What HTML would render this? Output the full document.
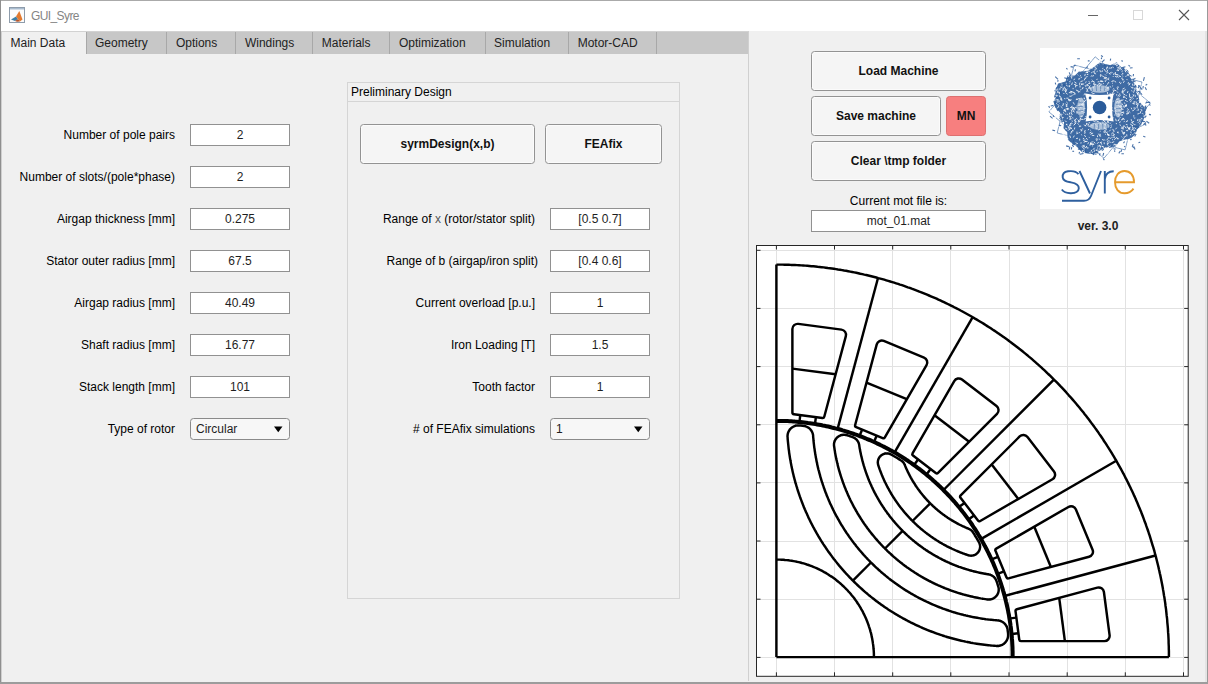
<!DOCTYPE html>
<html><head><meta charset="utf-8"><style>
html,body{margin:0;padding:0}
body{width:1208px;height:684px;position:relative;overflow:hidden;background:#f0f0f0;font-family:"Liberation Sans", sans-serif;font-size:12px;color:#1e1e1e}
.t{position:absolute;white-space:nowrap;line-height:14px;height:14px}
.ed{position:absolute;background:#fff;border:1px solid #919191;text-align:center;white-space:nowrap}
.bt{position:absolute;background:#f5f5f5;border:1px solid #939393;border-radius:3.5px;box-shadow:inset 0 0 0 1px #fbfbfb;text-align:center;font-weight:bold;white-space:nowrap;color:#111}
.pp{position:absolute;background:#f7f7f7;border:1px solid #8a8a8a;border-radius:3.5px;white-space:nowrap}
.tab{position:absolute;top:31px;box-sizing:border-box;border-left:1px solid #a8a8a8;line-height:22px;color:#222}
.tab span{position:absolute;left:8.5px;top:1px}
</style></head><body>
<div style="position:absolute;left:0;top:0;width:1208px;height:31px;background:#fff"></div>
<div style="position:absolute;left:0;top:0;width:1208px;height:1px;background:#aaa"></div>
<div style="position:absolute;left:0;top:0;width:1px;height:684px;background:#8f8f8f"></div><div style="position:absolute;left:1px;top:31px;width:1px;height:651px;background:#cfcfcf"></div>
<div style="position:absolute;left:1207px;top:0;width:1px;height:684px;background:#999"></div><div style="position:absolute;left:1205px;top:31px;width:2px;height:651px;background:#e4e4e4"></div>
<div style="position:absolute;left:0;top:682px;width:1208px;height:2px;background:#9c9c9c"></div>
<svg style="position:absolute;left:9px;top:7px" width="16" height="16"><rect x="0.5" y="0.5" width="15" height="15" fill="#fcfcfc" stroke="#8e9cab"/><rect x="1" y="1" width="14" height="1.5" fill="#a9bccf"/><path d="M2 12.5L7 9.5L9 12L6 14Z" fill="#3d7ea6"/><path d="M7 9.5L10.3 4L13.5 12.5L11 14.5L9 12Z" fill="#e27a30"/><path d="M9 12L11 14.5L8 14.8L6 14Z" fill="#b4562c"/></svg>
<div class="t" style="left:31px;top:9px;color:#858585;letter-spacing:-0.6px">GUI_Syre</div>
<svg style="position:absolute;left:1080px;top:5px" width="120" height="22"><g stroke="#666" stroke-width="1" fill="none"><path d="M8 10.5H18"/></g><g stroke="#555" stroke-width="1.1" fill="none"><path d="M99 5L109 15M109 5L99 15"/></g><rect x="53.5" y="5.5" width="9" height="9" fill="none" stroke="#d8d8d8"/></svg>
<div style="position:absolute;left:2px;top:31px;width:746px;height:23px;background:#c7c7c7"></div>
<div class="tab" style="left:2.0px;width:83.5px;height:24px;background:#f0f0f0;border-left:none;"><span>Main Data</span></div><div class="tab" style="left:85.5px;width:80.9px;height:23px;background:#c7c7c7;"><span>Geometry</span></div><div class="tab" style="left:166.4px;width:69.0px;height:23px;background:#c7c7c7;"><span>Options</span></div><div class="tab" style="left:235.4px;width:76.9px;height:23px;background:#c7c7c7;"><span>Windings</span></div><div class="tab" style="left:312.3px;width:76.7px;height:23px;background:#c7c7c7;"><span>Materials</span></div><div class="tab" style="left:389.4px;width:95.2px;height:23px;background:#c7c7c7;"><span>Optimization</span></div><div class="tab" style="left:484.6px;width:83.6px;height:23px;background:#c7c7c7;"><span>Simulation</span></div><div class="tab" style="left:568.2px;width:88.3px;height:23px;background:#c7c7c7;"><span>Motor-CAD</span></div>
<div style="position:absolute;left:656px;top:31px;width:1px;height:23px;background:#a8a8a8"></div>
<div style="position:absolute;left:2px;top:31px;width:746px;height:1px;background:#d2d2d2"></div>
<div style="position:absolute;left:748px;top:31px;width:1px;height:650px;background:#d0d0d0"></div>
<div class="t" style="left:-25px;top:128px;width:200px;text-align:right;color:#000">Number of pole pairs</div><div class="ed" style="left:190px;top:124px;width:98px;height:20px;line-height:20px">2</div><div class="t" style="left:-25px;top:170px;width:200px;text-align:right;color:#000">Number of slots/(pole*phase)</div><div class="ed" style="left:190px;top:166px;width:98px;height:20px;line-height:20px">2</div><div class="t" style="left:-25px;top:212px;width:200px;text-align:right;color:#000">Airgap thickness [mm]</div><div class="ed" style="left:190px;top:208px;width:98px;height:20px;line-height:20px">0.275</div><div class="t" style="left:-25px;top:254px;width:200px;text-align:right;color:#000">Stator outer radius [mm]</div><div class="ed" style="left:190px;top:250px;width:98px;height:20px;line-height:20px">67.5</div><div class="t" style="left:-25px;top:296px;width:200px;text-align:right;color:#000">Airgap radius [mm]</div><div class="ed" style="left:190px;top:292px;width:98px;height:20px;line-height:20px">40.49</div><div class="t" style="left:-25px;top:338px;width:200px;text-align:right;color:#000">Shaft radius [mm]</div><div class="ed" style="left:190px;top:334px;width:98px;height:20px;line-height:20px">16.77</div><div class="t" style="left:-25px;top:380px;width:200px;text-align:right;color:#000">Stack length [mm]</div><div class="ed" style="left:190px;top:376px;width:98px;height:20px;line-height:20px">101</div><div class="t" style="left:-25px;top:422px;width:200px;text-align:right;color:#000">Type of rotor</div><div class="pp" style="left:190px;top:418px;width:98px;height:20px;line-height:20px"><span style="margin-left:5px">Circular</span><svg style="position:absolute;left:83px;top:7px" width="9" height="7"><path d="M0 0.5H8.5L4.25 6.3Z" fill="#000"/></svg></div><div style="position:absolute;left:347px;top:82px;width:331px;height:515px;border:1px solid #d5d5d5"></div><div style="position:absolute;left:348px;top:101px;width:331px;height:1px;background:#d5d5d5"></div><div class="t" style="left:351px;top:85px;color:#000">Preliminary Design</div><div class="bt" style="left:360px;top:124px;width:173px;height:38px;line-height:38px;">syrmDesign(x,b)</div><div class="bt" style="left:545px;top:124px;width:115px;height:38px;line-height:38px;">FEAfix</div><div class="t" style="left:335px;top:212px;width:200px;text-align:right;color:#000">Range of <span style="color:#555">x</span> (rotor/stator split)</div><div class="ed" style="left:550px;top:208px;width:98px;height:20px;line-height:20px">[0.5 0.7]</div><div class="t" style="left:338px;top:254px;width:200px;text-align:right;color:#000">Range of b (airgap/iron split)</div><div class="ed" style="left:550px;top:250px;width:98px;height:20px;line-height:20px">[0.4 0.6]</div><div class="t" style="left:335px;top:296px;width:200px;text-align:right;color:#000">Current overload [p.u.]</div><div class="ed" style="left:550px;top:292px;width:98px;height:20px;line-height:20px">1</div><div class="t" style="left:335px;top:338px;width:200px;text-align:right;color:#000">Iron Loading [T]</div><div class="ed" style="left:550px;top:334px;width:98px;height:20px;line-height:20px">1.5</div><div class="t" style="left:335px;top:380px;width:200px;text-align:right;color:#000">Tooth factor</div><div class="ed" style="left:550px;top:376px;width:98px;height:20px;line-height:20px">1</div><div class="t" style="left:335px;top:422px;width:200px;text-align:right;color:#000"># of FEAfix simulations</div><div class="pp" style="left:550px;top:418px;width:98px;height:20px;line-height:20px"><span style="margin-left:5px">1</span><svg style="position:absolute;left:83px;top:7px" width="9" height="7"><path d="M0 0.5H8.5L4.25 6.3Z" fill="#000"/></svg></div><div class="bt" style="left:811px;top:51px;width:173px;height:38px;line-height:38px;">Load Machine</div><div class="bt" style="left:811px;top:96px;width:128px;height:38px;line-height:38px;">Save machine</div><div class="bt" style="left:946px;top:96px;width:38px;height:38px;line-height:38px;background:#f77f7f;border-color:#dd7070;box-shadow:none;">MN</div><div class="bt" style="left:811px;top:141px;width:173px;height:38px;line-height:38px;">Clear \tmp folder</div><div class="t" style="left:798.5px;top:194px;width:200px;text-align:center;color:#000">Current mot file is:</div><div class="ed" style="left:811px;top:210px;width:173px;height:20px;line-height:20px">mot_01.mat</div><div class="t" style="left:998.0px;top:219px;width:200px;text-align:center;font-weight:bold;color:#222">ver. 3.0</div><svg style="position:absolute;left:0;top:0" width="1208" height="684"><rect x="1040" y="48" width="120" height="161" fill="#fff"/>
<path d="M1144.6 107.5L1145.5 113.5L1143.7 119.3L1141.1 124.7L1137.4 129.3L1135.1 134.7L1130.6 138.5L1124.4 139.8L1119.2 141.4L1115.7 146.4L1110.2 147.1L1104.9 147.8L1099.6 150.7L1093.5 154.2L1087.3 153.4L1081.3 151.6L1076.9 146.8L1072.0 143.4L1067.6 139.5L1067.2 132.3L1063.5 128.3L1064.1 122.2L1058.9 118.4L1060.2 112.7L1055.2 107.5L1053.4 101.4L1056.9 96.1L1055.3 89.2L1058.2 83.6L1065.5 81.4L1067.5 75.4L1074.9 75.4L1078.9 71.6L1084.6 71.2L1089.6 70.1L1094.2 66.8L1099.6 62.5L1105.3 64.1L1110.9 65.2L1117.6 64.1L1122.4 68.0L1128.1 70.3L1130.0 77.1L1133.0 81.9L1136.7 86.1L1136.2 92.3L1138.5 97.1L1139.9 102.2Z" fill="#2a5b9a" opacity="0.9"/>
<path d="M1125.1 149.9L1057.2 133.0L1074.1 65.1L1142.0 82.0ZM1104.0 158.2L1048.9 111.9L1095.2 56.8L1150.3 103.1ZM1082.4 152.4L1054.7 90.3L1116.8 62.6L1144.5 124.7Z" stroke="#3a69a5" stroke-width="0.9" fill="none" opacity="0.7"/>
<path d="M1113.2 101.5l0.5 -0.8M1129.9 97.9l1.4 -0.6M1101.9 144.7l-1.0 -1.9M1060.0 116.7l-0.8 -0.9M1092.0 87.5l-1.4 1.4M1114.6 148.3l0.4 -1.4M1092.2 76.2l1.8 -0.7M1091.7 60.3l1.3 1.8M1123.4 73.7l-1.4 -0.5M1133.6 98.4l-1.1 0.8M1088.6 113.5l1.8 -0.8M1078.0 148.5l1.0 2.4M1123.8 144.3l1.4 0.7M1120.9 68.0l-1.0 -0.2M1071.7 108.9l1.4 1.1M1091.5 151.8l1.5 0.6M1104.0 119.8l1.3 -0.6M1054.4 113.1l-0.8 -1.4M1076.2 145.8l-1.8 1.3M1096.6 69.3l-0.6 -1.6M1140.6 109.0l0.5 0.7M1107.2 132.6l0.2 0.9M1128.7 82.2l-1.0 1.1M1085.5 77.3l2.1 -0.8M1091.0 76.7l0.6 -1.3M1118.2 88.0l-0.3 -1.7M1084.8 141.1l1.6 0.5M1082.5 104.2l0.8 -1.4M1085.1 102.1l-1.4 -1.0M1058.3 101.0l-1.8 0.1M1100.1 146.4l-0.8 -1.6M1124.9 106.0l2.1 -0.6M1072.2 117.7l1.2 0.4M1099.9 122.6l1.2 2.0M1099.8 148.3l0.3 0.9M1059.1 107.1l-1.7 0.5M1071.1 109.6l0.7 2.3M1099.3 149.4l-0.5 1.0M1118.6 99.3l0.7 1.3M1110.8 112.0l-1.0 0.6M1137.9 102.9l0.1 2.4M1133.8 89.1l0.6 -0.8M1106.1 75.5l-1.0 -1.0M1128.1 129.4l1.0 -1.9M1072.7 130.3l-1.8 1.8M1060.1 129.7l-0.9 1.1M1096.4 125.9l1.1 0.5M1065.1 120.6l0.5 0.7M1130.5 141.9l1.4 -0.4M1081.2 119.2l2.2 0.3M1116.9 99.3l-0.1 2.0M1099.8 142.7l2.3 -0.7M1080.5 104.6l-0.9 0.6M1090.0 66.5l-0.6 1.0M1074.3 129.5l0.5 -2.0M1071.0 118.6l-0.6 0.7M1052.8 106.9l-1.4 -1.1M1112.2 72.1l-0.5 1.2M1054.1 107.5l1.6 1.9M1057.1 114.8l1.2 -1.1M1077.1 105.4l-0.7 1.0M1064.4 133.7l2.2 0.2M1145.7 94.2l0.7 1.9M1114.3 144.7l1.4 0.3M1110.2 123.7l0.6 -1.0M1112.1 83.1l0.8 0.3M1116.6 99.7l2.3 0.2M1106.4 153.5l-1.1 -0.6M1125.2 103.4l-1.3 -0.6M1092.1 144.5l2.1 -0.1M1132.8 126.8l-1.1 -2.0M1079.5 78.3l-0.4 1.2M1132.5 122.6l0.8 1.7M1122.1 91.1l0.1 1.9M1140.6 106.6l0.7 -2.3M1073.1 92.2l1.6 1.0M1059.1 102.1l-0.1 -1.7M1104.2 126.7l-0.8 2.5M1124.7 119.7l-1.3 -0.5M1095.4 124.1l0.7 1.0M1141.7 97.3l-2.3 0.9M1088.5 123.0l-1.3 1.2M1097.8 65.7l-2.4 0.5M1122.7 93.1l1.7 1.7M1085.6 85.4l2.2 -0.6M1105.4 121.9l-1.5 -0.5M1059.3 92.5l0.1 1.7M1065.0 87.8l0.9 2.3M1086.1 125.3l-1.3 0.4M1093.0 83.9l2.3 0.1M1138.4 132.3l-1.3 0.1M1106.8 140.2l1.1 -1.8M1113.3 130.6l1.0 1.4M1127.3 70.0l-2.0 1.2M1066.0 134.7l1.3 1.0M1091.4 92.6l1.1 -0.3M1066.3 90.1l-0.7 2.3M1102.3 121.6l0.9 1.3M1097.4 78.8l-0.8 1.2M1073.1 102.2l1.3 2.3M1106.5 63.5l-1.8 -0.5M1128.6 129.4l1.8 -0.1M1058.7 116.2l1.1 -1.2M1103.8 120.5l-1.4 -2.1M1056.5 98.2l-0.9 -0.2M1133.0 128.2l1.6 -0.6M1117.6 112.9l-0.4 -0.9M1125.0 145.4l0.4 2.3M1102.8 70.8l-1.0 0.1M1072.0 143.1l-2.1 0.6M1061.7 134.9l2.0 1.0M1118.4 131.9l-1.3 0.9M1075.7 120.8l-1.8 -0.9M1093.0 80.9l-1.8 1.0M1115.7 138.1l-1.4 1.8M1125.9 94.8l0.4 1.3M1067.5 104.3l-1.5 1.1M1139.8 113.4l-2.4 0.6M1067.2 118.8l0.5 -1.2M1128.0 126.9l-1.4 0.1M1124.8 126.4l1.4 2.0M1062.4 126.6l-0.7 -1.5M1084.5 108.5l-1.5 0.7M1112.2 108.4l-1.6 0.5M1122.4 128.0l-0.7 -1.3M1103.6 63.7l-0.4 0.7M1113.5 74.9l0.6 -1.7M1136.2 125.4l-2.4 -0.9M1097.4 146.0l2.4 -0.0M1068.7 109.6l0.1 -0.9M1103.7 146.9l-2.2 -0.7M1119.4 65.5l0.1 1.0M1143.3 116.3l0.9 -0.5M1098.2 151.2l1.4 0.3M1122.0 109.1l-1.4 -1.2M1111.2 87.4l-1.4 -1.0M1110.7 146.0l-1.9 1.2M1124.7 132.9l-1.2 0.3M1059.4 118.5l0.1 -1.8M1132.3 110.8l1.7 -0.6M1083.0 111.4l-2.0 0.1M1078.4 105.7l0.9 0.4M1113.2 135.1l1.6 -0.6M1125.8 105.6l0.7 -1.2M1106.6 71.8l1.3 -2.0M1117.8 92.7l-0.1 -1.0M1094.1 124.3l-0.7 -0.7M1072.2 95.4l-1.0 0.7M1062.1 81.2l-0.3 -1.7M1075.5 148.8l0.1 1.0M1079.9 120.9l0.2 -2.1M1110.9 125.8l0.8 -1.2M1065.4 98.9l-1.3 -0.4M1079.7 140.6l0.0 -1.9M1069.5 116.0l-0.1 1.0M1115.8 113.5l0.8 -0.6M1063.6 86.1l1.0 2.0M1072.4 92.1l-2.3 -0.6M1121.1 113.6l0.0 -0.9M1127.5 143.6l2.2 0.6M1086.5 65.2l-1.6 0.2M1123.6 96.3l-0.1 1.3M1061.7 87.6l-1.6 -0.7M1116.3 121.2l-0.7 -2.5M1063.5 93.0l0.7 1.0M1137.6 109.9l-0.5 0.7M1134.1 91.2l-0.6 1.5M1085.8 152.4l-1.6 0.2M1113.4 118.3l0.2 -0.8M1086.1 78.4l-1.6 0.0M1064.2 135.2l-0.5 -0.9M1083.3 105.9l-1.3 0.7M1121.8 72.1l0.5 -2.5M1140.1 90.5l-0.8 1.2M1084.1 112.1l0.2 0.9M1071.4 125.0l-2.1 0.5M1140.4 113.4l0.2 -2.1M1090.9 119.3l1.3 1.5M1142.6 100.0l-1.6 -1.5M1139.5 91.2l-1.3 2.2M1132.6 129.7l2.3 0.9M1073.6 94.6l-1.1 0.6M1084.0 80.5l0.8 -1.5M1092.5 69.1l-0.4 -0.7M1129.8 142.2l0.5 -2.2M1084.5 94.2l-0.9 1.0M1056.4 87.0l0.5 -1.6M1121.9 131.1l1.4 2.2M1144.9 100.8l1.2 1.1M1066.3 98.2l2.2 -0.0M1126.4 113.4l2.6 0.0M1136.5 78.1l-2.0 1.4M1078.6 92.6l-0.4 -1.5M1074.7 112.2l-2.1 -1.3M1099.7 61.1l-0.6 -0.8M1122.2 118.4l1.9 0.1M1085.6 119.0l-0.6 -1.0M1101.1 136.2l-1.8 -0.3M1118.7 67.3l1.9 1.6M1099.8 89.1l1.4 0.5M1083.9 140.6l-0.6 -1.0M1096.9 149.3l0.3 2.0M1063.1 134.6l0.8 1.4M1093.7 141.7l1.5 1.7M1069.3 128.3l-1.4 -2.0M1122.3 137.3l-0.8 -0.6M1139.9 130.2l-1.1 1.1M1088.5 96.5l-1.6 0.2M1067.9 76.7l1.2 -0.3M1083.3 64.1l-0.7 -0.8M1096.7 119.9l-1.5 0.4M1059.3 91.9l-1.9 0.6M1115.7 146.1l1.3 -2.0M1143.5 93.6l-0.6 2.1M1116.8 64.7l1.3 1.0M1110.4 153.7l-1.0 -0.4M1094.0 152.0l0.3 -1.1M1065.4 92.0l0.7 -1.7M1095.6 150.3l1.5 -0.0M1056.7 96.3l1.1 -0.8M1071.5 114.2l0.2 -1.9M1083.6 69.5l-0.6 1.0M1062.2 87.7l2.2 1.0M1052.0 109.4l1.1 0.8M1118.8 106.5l2.2 -0.3M1059.2 126.3l-1.1 -0.3M1114.3 130.5l-1.6 -0.8M1115.5 62.6l0.4 0.7M1089.7 71.4l-2.5 -0.8M1134.4 109.8l1.0 -1.2M1081.3 104.6l2.4 -0.6M1094.3 121.6l1.1 -0.1M1094.6 150.7l-0.7 -1.3M1107.6 121.3l-0.8 2.1M1122.6 93.0l1.3 -1.6M1056.7 103.8l-0.4 -1.1M1094.8 70.7l0.5 -2.0M1109.0 123.3l-0.9 -2.2M1141.9 123.1l1.7 0.1M1122.4 114.5l-0.0 1.1M1088.1 91.8l-0.7 -1.7M1090.2 154.1l-0.4 1.2M1074.7 71.4l0.2 2.1M1077.2 111.4l-0.1 2.4M1087.0 66.8l-0.5 -1.4M1110.8 152.4l-1.0 0.8M1078.8 122.5l1.3 -1.7M1060.8 97.1l0.9 2.3M1069.8 135.6l0.8 2.3M1120.5 125.9l-0.6 -1.5M1122.9 89.9l-0.3 2.2M1078.2 75.4l-0.6 -0.8M1126.6 79.1l0.9 1.0M1122.8 78.7l0.3 1.0M1120.8 105.8l1.8 1.2M1058.5 124.8l0.8 0.3M1126.4 114.1l1.0 0.4M1118.4 120.9l0.7 -1.4M1057.3 99.5l0.9 -0.3M1118.6 109.0l-1.5 -1.5M1093.0 149.5l1.7 -1.7M1116.5 102.8l1.3 -1.7M1109.4 73.7l1.9 -1.5M1113.3 132.7l-1.8 0.7M1056.8 121.0l-0.8 0.8M1084.5 62.8l0.4 1.0M1129.7 95.7l-0.2 1.7M1100.0 133.7l0.4 1.7M1109.0 88.3l-1.6 -1.1M1075.2 120.9l-0.2 2.4M1127.2 127.0l1.3 0.8M1142.4 107.0l-0.6 0.7M1133.6 139.8l1.7 1.4M1106.8 73.6l0.7 -2.1M1070.2 100.1l1.0 -0.0M1066.8 133.6l-1.5 -0.8M1084.4 135.0l1.3 2.0M1054.9 93.3l-1.6 0.3M1092.8 120.7l1.6 0.5M1114.1 108.1l1.9 0.1M1066.5 74.1l2.0 0.5M1109.2 142.2l-1.5 1.9M1076.4 118.4l0.9 1.1M1108.4 149.6l-0.2 -2.4M1093.6 63.0l2.3 -0.6M1098.8 121.8l-2.3 -0.7M1054.6 118.4l0.7 -1.2M1076.1 123.0l-1.8 1.5M1122.7 140.1l1.2 -0.1M1112.6 129.4l0.7 0.4M1075.2 85.7l2.4 -0.2M1068.3 108.2l-1.5 0.4M1061.3 130.6l1.3 -1.7M1081.8 135.3l-0.4 -0.9M1070.7 75.1l-0.4 -1.2M1108.5 82.4l-1.1 2.2M1062.5 118.3l1.1 -0.9M1107.6 78.6l1.6 1.4M1068.3 138.7l-1.4 0.5M1070.7 123.0l-0.8 2.0M1100.5 83.6l-1.5 -0.4M1088.4 85.6l-1.3 -1.4M1141.1 128.5l1.7 0.5M1079.9 82.6l-0.4 2.2M1139.8 85.8l-2.3 0.9M1060.9 113.4l-0.1 0.9M1118.2 147.8l-0.7 -1.4M1070.9 90.9l1.3 1.3M1082.6 105.0l-1.8 -0.7M1126.8 146.4l0.5 -0.8M1144.4 98.7l-1.9 1.4M1075.1 78.9l-1.6 0.9M1105.5 63.8l0.7 -0.4M1095.6 74.3l-1.5 -2.1M1077.5 90.0l0.7 1.4M1102.1 84.0l-1.5 0.6M1075.4 87.4l0.5 -1.9M1075.9 89.8l1.4 1.0M1064.9 79.0l-1.7 -0.2M1068.8 126.9l0.8 -1.5M1101.4 75.5l-0.3 0.7M1075.8 72.7l-0.6 0.8M1113.0 76.2l0.6 0.8M1075.1 124.0l-1.6 1.3M1105.1 148.7l0.2 -1.4M1065.8 105.6l1.3 0.9M1134.1 117.7l-0.1 -1.1M1141.0 99.7l-1.7 1.3M1106.3 132.5l1.1 -0.7M1066.4 102.0l1.3 1.2M1138.2 108.7l0.2 1.9M1067.4 73.1l1.2 1.1M1094.3 135.6l-2.5 -0.3M1064.1 113.6l-0.7 -1.3M1067.4 94.4l-1.3 -1.6M1120.4 94.2l-1.0 -0.4M1145.5 102.8l-1.4 -0.5M1103.5 147.1l-1.2 -0.9M1100.7 81.5l2.6 0.1M1051.8 110.4l-2.2 0.1M1130.2 124.1l1.2 0.3M1079.8 76.3l1.2 -0.9M1101.5 154.5l0.4 1.3M1088.2 83.7l2.1 -0.4M1069.6 127.9l2.4 0.8M1088.7 142.3l-1.0 1.9M1121.1 100.8l2.3 -1.1M1089.1 129.2l-1.2 0.8M1115.3 74.6l0.1 -2.6M1057.7 115.6l1.3 -0.2M1131.4 100.3l-1.0 1.9M1094.6 82.1l-1.8 -0.9M1093.7 143.9l-2.4 -0.1M1115.3 64.1l1.1 1.9M1084.1 124.6l1.7 1.8M1105.4 125.2l-1.1 -0.7M1101.0 85.3l-1.5 -1.1M1076.2 144.8l-2.4 0.6M1109.2 68.7l0.7 -1.3M1082.6 103.8l1.5 0.9M1137.0 103.2l-0.9 1.8M1106.7 69.5l-0.0 -2.2M1063.7 132.3l-2.1 0.2M1070.3 118.4l-0.3 -2.5M1135.0 104.1l-1.8 -0.8M1063.5 124.4l-0.8 0.4M1125.4 97.6l1.6 1.4M1123.7 113.7l-0.1 -2.2M1114.2 134.3l-1.1 -0.7M1121.8 112.5l1.3 -0.0M1088.6 87.3l1.9 -1.6M1060.8 115.6l1.5 -1.5M1069.4 96.2l1.8 0.1M1124.8 70.2l1.2 2.1M1072.4 108.1l0.7 1.1M1106.1 119.7l-1.1 -0.0M1142.5 123.2l0.9 -0.1M1104.4 121.0l-1.8 -1.2M1131.6 98.3l-0.9 -0.5M1134.8 80.4l-0.9 -0.4M1082.2 128.6l0.9 0.5M1071.6 146.0l-0.7 -1.5M1122.6 67.8l1.8 -0.6M1111.9 82.0l-0.1 -0.9M1087.4 66.8l2.0 -0.3M1074.4 108.0l-1.3 0.2M1112.3 66.8l1.4 0.9M1082.6 88.9l0.5 -1.9M1073.1 89.2l-0.0 -1.3M1081.1 119.8l-1.0 -2.2M1063.6 110.0l1.0 0.3M1107.3 152.2l0.4 1.8M1056.1 89.8l-0.9 -0.9M1108.9 137.1l-0.4 0.9M1052.8 116.0l-1.5 0.5M1113.7 93.6l-1.3 1.5M1121.2 82.4l-0.9 1.7M1122.7 105.2l-0.7 -1.7M1077.5 132.2l-1.2 0.0M1142.5 118.8l-1.7 -0.7M1122.5 114.5l-1.6 0.8M1062.7 87.0l-1.1 -1.0M1089.6 145.3l0.9 -0.8M1091.9 143.5l-1.7 1.7M1104.9 131.2l-0.1 -1.3M1124.9 94.4l-0.9 0.5M1140.5 101.3l-1.5 1.8M1129.4 112.0l0.9 0.7M1137.6 120.4l0.1 -0.9M1084.5 98.1l-0.8 0.3M1083.9 152.8l-2.1 -1.5M1091.9 149.9l-1.1 1.4M1119.6 94.3l-1.9 1.8M1091.8 79.7l0.6 0.7M1087.1 95.3l-2.4 -0.6M1082.4 104.6l1.3 1.9M1070.0 118.9l1.5 -0.1M1066.5 82.8l-0.2 0.9M1067.6 106.0l-1.7 0.4M1060.1 118.6l1.2 1.0M1060.9 82.2l-0.1 1.0M1069.5 83.2l0.7 -0.4M1122.5 89.1l2.1 -1.1M1079.9 92.2l-0.4 -1.1M1060.7 127.9l1.3 0.1M1145.7 116.0l1.2 -1.6M1112.3 135.9l-0.6 -1.3M1083.6 150.5l-1.6 0.2M1120.3 121.2l-0.8 1.9M1089.6 122.2l-0.0 1.1M1082.5 88.3l-0.7 1.2M1061.7 124.9l0.1 -1.9M1104.6 90.6l1.6 -1.4M1079.0 78.3l-0.3 1.1M1119.1 109.8l-0.0 1.2M1126.9 108.8l0.8 -0.1M1085.6 147.0l0.1 1.1M1128.6 109.1l-1.0 1.6M1114.7 90.7l-2.1 -0.8M1057.4 100.0l1.2 -0.2M1133.9 121.2l-0.7 0.7M1128.7 76.1l-1.3 -2.2M1075.1 69.4l2.4 -0.4M1092.8 141.8l-1.6 0.4M1117.0 87.5l0.9 2.2M1067.7 108.5l0.9 0.1M1090.9 144.6l-0.3 -2.2M1069.5 101.2l0.2 -1.6M1114.0 80.8l-2.0 0.3M1073.6 92.3l1.9 1.4M1103.1 61.5l1.2 0.1M1133.6 121.6l-2.4 0.7M1131.8 109.3l-0.6 -1.6M1135.6 96.7l-0.7 -2.0M1065.4 109.2l1.8 -0.4M1131.1 139.4l-0.1 -1.0M1080.4 129.6l1.1 0.3M1099.4 81.5l-1.8 0.5M1079.5 71.0l1.1 0.3M1115.4 110.1l0.8 1.7M1138.4 119.4l-1.4 1.3M1116.1 82.2l-1.8 -1.2M1111.5 61.4l-0.8 -0.1M1063.3 103.2l-0.1 2.2M1139.2 101.2l-0.2 -1.0M1065.2 128.1l2.1 1.3M1105.7 79.2l0.9 -2.2M1069.6 113.5l0.5 -1.1M1072.0 70.4l-0.7 -0.8M1132.0 76.8l-0.4 -1.6M1084.3 146.4l-2.0 -0.6M1072.6 131.7l-1.3 0.9M1060.6 98.3l0.3 1.8M1061.0 121.1l-0.7 0.6M1093.5 82.0l0.9 0.4M1125.8 124.4l1.8 0.5M1091.3 124.9l1.0 1.0M1118.7 70.2l-1.3 -1.0M1112.6 85.5l-0.1 0.9M1133.0 126.1l-1.2 -1.3M1120.1 81.8l-1.1 1.0M1116.9 67.2l2.2 1.2M1137.3 108.3l-0.4 -1.5M1112.1 148.8l1.1 1.3M1062.6 108.1l-1.9 -1.8M1135.9 127.8l-1.1 1.5M1091.5 144.5l-0.7 -1.1M1069.6 92.5l2.1 0.6M1090.0 129.8l0.7 0.6M1129.9 139.8l-1.6 0.5M1123.8 134.8l-0.3 -1.3M1078.5 120.0l-0.1 2.1M1120.9 108.9l2.6 0.4M1100.2 81.2l0.9 0.5M1140.9 96.9l-1.1 -2.3M1069.8 85.1l-0.5 2.1M1072.8 76.5l0.3 -0.8M1100.6 145.6l-0.3 2.2M1088.3 74.7l-1.5 -0.4M1102.6 62.0l-1.0 -1.2M1119.5 76.2l-0.8 -0.4M1144.3 106.6l1.1 0.1M1100.9 152.3l-1.2 -0.3M1103.3 67.9l-0.9 1.2M1056.3 124.0l-0.8 -0.3M1133.9 115.1l-0.4 1.3M1084.5 66.6l1.8 -1.7M1068.7 73.2l-1.1 0.4M1133.8 96.5l-0.7 -2.2M1138.1 129.8l-1.5 0.1M1124.4 133.7l0.3 -1.4M1107.4 66.5l0.3 1.6M1132.4 96.5l-0.3 1.3M1058.1 111.3l-1.1 0.2M1098.2 63.1l1.4 0.8M1058.8 92.3l1.2 0.2M1118.7 119.6l-0.8 1.5M1060.8 88.8l-2.1 0.4M1115.2 74.3l2.4 0.4M1122.1 143.2l-1.7 -1.0M1087.8 86.2l0.1 -1.3M1055.6 117.9l-0.1 -0.9M1084.3 149.7l-0.8 -2.0M1112.1 136.8l-0.3 1.4M1062.0 90.3l2.0 -0.7M1101.8 63.3l-0.8 -1.5M1069.2 114.4l-0.1 1.0M1114.2 141.6l-2.2 1.0M1076.1 138.6l1.9 -0.4M1085.0 141.6l2.6 -0.3M1124.1 136.7l0.3 0.8M1061.7 115.3l-1.7 -0.9M1062.2 118.2l-0.8 0.2M1068.2 75.0l-0.5 1.1M1099.1 139.5l0.8 -0.5M1102.1 151.7l1.5 1.3M1075.1 107.5l2.1 0.5M1108.3 152.6l0.9 -0.7M1098.4 133.7l1.4 2.1M1093.1 133.1l-1.5 0.5M1071.8 107.6l-1.2 0.0M1122.9 76.5l-0.4 0.8M1131.4 87.3l-0.6 -0.7M1065.7 114.2l-0.7 0.6M1071.6 115.1l0.9 -0.9M1135.8 84.3l-1.2 -0.5M1133.0 127.5l-1.0 0.4M1128.6 128.4l1.5 0.4M1097.9 84.9l1.3 -1.6M1093.7 65.4l1.4 1.2M1124.5 140.5l2.0 -0.4M1137.8 84.2l-1.4 -0.3M1074.3 81.8l2.2 1.4M1067.3 108.3l0.4 1.8M1131.3 90.6l1.1 0.6M1071.6 84.9l0.8 -2.4M1096.6 71.7l1.1 -0.6M1079.7 151.0l0.7 2.2M1088.0 89.6l-2.3 -1.2M1083.2 145.7l1.9 1.6M1105.9 80.7l1.7 -1.8M1108.2 148.6l-1.3 -0.6M1061.6 98.9l0.3 2.1M1129.3 111.6l-0.2 -0.8M1113.0 139.8l-0.9 -0.2M1138.9 80.5l0.8 -2.0M1123.4 126.2l1.5 -0.1M1127.4 93.0l0.6 -1.9M1082.3 129.9l-1.1 0.1M1116.7 94.2l-0.1 1.3M1110.1 93.1l0.1 1.2M1057.1 108.9l0.7 -1.1M1107.6 94.1l-0.2 -2.1M1072.7 107.2l1.7 0.8M1061.4 80.7l-1.0 -0.0M1141.2 86.0l0.4 1.8M1067.8 130.9l0.6 -1.7M1058.5 115.1l0.2 -2.5M1122.8 90.8l0.8 0.4M1060.0 120.3l2.0 0.5M1081.5 107.9l-1.2 -0.4M1064.3 109.1l1.4 2.0M1071.6 76.7l0.1 1.9M1138.2 87.0l-1.9 -1.3M1128.8 70.6l-1.2 -1.2M1146.2 118.9l-1.4 2.0M1057.5 104.5l0.9 0.6M1142.5 99.2l-0.9 -2.2M1104.1 79.1l0.8 -2.5M1120.2 146.3l0.6 -1.9M1127.4 71.6l1.3 1.2M1123.7 105.3l0.9 1.1M1132.4 87.3l0.9 0.2M1076.1 98.9l1.4 0.6M1095.5 73.2l-1.1 0.2M1113.3 94.3l-1.5 -0.9M1095.2 68.1l-0.0 -1.1M1085.0 141.1l-1.0 1.6M1074.1 94.2l1.3 -0.1M1066.2 124.5l1.4 0.4M1109.2 78.0l-1.1 0.4M1062.6 120.1l-1.4 0.9M1069.5 82.0l1.0 -1.3M1099.9 75.7l1.1 0.9M1122.5 133.4l2.2 -1.1M1109.4 87.1l-0.7 0.6M1123.7 121.7l1.0 -0.3M1119.8 102.4l-0.9 -0.8M1102.0 90.3l-0.0 -0.8M1086.0 91.2l1.5 -0.1M1110.1 128.0l1.8 -1.3M1088.1 117.8l-0.7 0.6M1118.7 96.6l1.9 -1.1M1131.5 130.7l-0.8 0.6M1113.1 111.4l-0.8 -1.7M1067.4 88.8l-1.0 1.0M1067.0 86.1l-0.4 -1.3M1102.8 84.0l1.0 -0.6M1076.3 133.8l1.7 -0.6M1144.0 125.7l-0.6 -2.2M1130.8 131.9l0.5 1.3M1123.3 138.5l1.1 -0.6M1128.8 112.5l-2.2 -0.9M1088.7 87.9l2.3 0.3M1097.1 147.8l1.0 0.5M1081.7 146.5l1.3 1.1M1134.8 89.4l-0.8 1.8M1067.0 79.3l0.4 1.8M1123.1 128.3l-2.2 -0.1M1067.1 78.7l0.5 0.9M1125.7 100.0l-0.4 0.9M1069.8 92.6l-0.9 0.1M1125.5 105.5l0.7 1.2M1087.5 139.7l-1.3 -1.7M1087.5 71.2l-1.8 -0.8M1119.1 113.3l-0.0 2.4M1070.9 144.8l-0.9 -0.4M1084.7 133.8l0.5 -2.0M1120.5 107.5l1.9 1.7M1072.1 92.4l0.6 -1.0M1079.5 132.1l-0.6 1.2M1107.9 134.2l2.2 1.3M1078.6 124.6l-1.0 -1.3M1097.8 86.1l-1.0 -1.6M1110.7 129.7l-1.5 1.7M1132.7 83.7l-0.1 1.9M1139.2 128.8l0.8 -1.0M1131.3 140.9l0.8 0.5M1109.0 146.7l-1.0 -1.3M1057.3 91.2l1.0 -0.3M1074.9 146.2l-1.1 0.3M1084.2 138.7l-1.3 -0.4M1065.1 75.3l1.6 -0.8M1054.0 103.3l-0.5 2.2M1117.7 67.7l-1.7 -0.6M1137.7 104.7l-0.5 2.2M1131.5 80.5l1.5 -0.3M1065.4 103.6l1.4 1.4M1070.4 129.0l-2.2 1.3M1062.5 105.3l0.2 0.8M1135.0 138.1l-1.5 -0.4M1117.6 104.8l1.6 -1.4M1134.8 102.4l-0.9 1.0M1082.4 85.1l1.4 -1.6M1126.6 100.7l0.8 1.3M1128.4 128.0l1.7 0.1M1128.4 74.7l0.3 -0.8M1118.4 67.6l0.8 -1.5M1147.4 103.9l1.0 0.7M1102.8 151.0l-1.7 0.8M1124.3 81.7l-0.3 -1.0M1055.6 100.0l-2.3 0.4M1115.4 113.1l0.8 0.3M1139.1 120.4l1.5 2.1M1068.2 128.0l1.6 0.1M1092.5 72.0l-1.3 0.9M1123.8 133.3l0.5 -0.8M1129.4 93.5l0.2 2.4M1104.6 87.1l1.6 0.4M1113.3 145.1l1.6 -1.1M1128.2 74.8l0.1 -0.8M1092.9 72.0l1.8 -0.6M1094.5 93.4l-2.3 0.4M1144.5 106.9l1.0 -2.4M1117.4 151.5l-1.2 -1.2M1068.3 98.9l0.4 1.1M1143.7 124.0l-0.1 -2.0M1117.8 70.7l1.3 -0.2M1133.9 86.0l1.2 -2.0M1072.5 123.6l-1.5 -0.7M1117.7 138.0l0.9 1.1M1145.2 116.6l-0.5 -1.0M1145.6 117.1l-1.0 -1.5M1070.7 116.4l1.1 -0.2M1124.1 81.8l-1.1 0.9M1068.7 85.7l-0.8 0.9M1123.0 106.6l2.0 0.7M1105.8 64.0l-0.6 -1.3M1110.8 68.8l1.0 -2.0M1117.0 137.0l-1.0 1.5M1106.2 123.3l-0.8 -0.9M1080.1 64.0l1.9 1.2M1143.4 114.0l-1.1 -0.7M1102.0 139.4l2.1 0.9M1119.9 117.1l0.5 0.8M1092.2 65.9l-2.0 -0.3M1121.0 119.9l2.2 -0.4M1053.1 102.9l-2.0 1.0M1116.4 112.6l0.7 -0.7M1130.6 72.8l-1.6 -1.0M1075.5 142.8l2.4 0.8M1104.2 60.4l-1.3 -1.7M1062.9 129.4l-1.3 0.5M1102.3 71.0l-0.6 1.1M1125.5 106.8l0.4 -2.2M1053.4 100.6l-1.4 1.0M1105.3 140.2l-1.0 -0.4M1098.9 154.6l-0.0 -1.9M1120.2 113.4l1.6 -1.0M1113.3 135.1l1.3 1.4M1127.3 121.6l-0.6 -0.7M1082.3 116.2l-1.3 0.3M1133.5 104.3l-1.0 -1.4M1100.2 60.5l-0.5 1.7M1120.9 70.4l0.7 -1.6M1081.2 102.4l2.3 0.1M1128.1 130.7l-2.0 -0.1M1105.2 132.2l-1.9 -0.3M1069.3 112.9l0.7 1.3M1084.6 70.1l2.0 -1.0M1057.6 88.6l-1.0 2.1M1114.2 62.1l0.0 1.9M1140.2 132.0l-1.1 1.6M1127.7 120.3l-1.7 1.9M1079.7 108.7l-0.7 1.6M1127.3 139.8l-0.4 1.2M1054.8 113.4l1.0 -1.4M1076.0 122.3l-0.2 -1.3M1136.0 103.3l0.7 -1.7M1112.4 93.2l1.4 -2.1M1107.7 120.7l-0.0 0.9M1105.2 80.5l0.2 1.4M1108.8 136.0l-1.3 -2.2M1079.9 104.9l-1.3 0.2M1126.7 134.3l0.2 2.1M1085.3 73.9l-0.6 2.2M1132.6 121.9l-0.5 0.9M1089.6 137.5l-0.8 -0.2M1083.5 141.1l1.5 -1.7M1074.1 67.1l1.0 1.3M1061.2 117.0l1.0 -0.2M1083.3 84.0l-2.2 -0.2M1140.1 100.8l2.2 0.1M1118.1 101.6l0.5 1.1M1105.8 77.0l-0.5 1.7M1107.5 133.6l0.1 1.8M1107.3 142.5l0.1 2.4M1071.3 133.7l-1.0 -0.6M1129.0 100.3l2.2 -1.1M1136.1 87.4l0.8 1.7M1106.2 132.5l-0.6 0.7M1065.9 121.9l0.4 -0.9M1086.4 61.9l-0.8 0.3M1123.5 138.9l-1.6 1.5M1117.3 137.9l0.6 1.5M1061.0 121.1l1.4 1.9M1140.2 112.9l0.8 0.9M1094.9 84.3l1.0 0.3M1092.8 146.1l-0.8 -0.5M1063.9 123.3l-1.0 -0.1M1085.3 116.6l1.3 0.3M1069.2 119.1l1.0 0.2M1085.1 151.3l-1.1 -0.2M1066.6 132.4l-1.6 -0.7M1106.6 85.2l-1.4 1.8M1053.0 118.6l-1.7 -0.6M1118.0 114.9l0.5 -2.3M1092.3 87.2l1.0 0.8M1074.3 146.8l0.7 -0.8M1112.5 107.8l-1.6 -0.3M1071.1 128.2l-0.6 -1.4M1108.1 87.0l0.8 0.2M1086.8 97.7l-0.8 -1.6M1098.3 139.0l-0.8 -0.0M1078.9 126.1l2.3 0.0M1138.0 122.8l0.7 -1.1M1134.2 132.9l2.1 0.3M1110.3 141.8l0.9 1.1M1084.8 85.7l1.5 0.9M1069.9 100.9l1.6 -1.2M1118.8 115.7l-0.5 0.9M1062.6 85.6l-0.8 -1.9M1109.7 141.0l-1.1 -0.2M1120.7 67.6l-1.2 1.9M1131.3 87.5l1.7 0.6M1054.6 121.5l1.6 1.3M1122.0 79.9l1.4 -0.2M1090.2 126.4l-2.4 -0.6M1102.7 81.1l-2.3 -0.4M1066.7 123.8l-0.5 1.3M1110.5 138.8l-0.2 -0.9M1119.4 101.5l0.7 -1.7M1086.6 122.9l-0.2 2.0M1121.0 76.7l-2.1 -0.8M1098.7 142.0l-1.6 1.8M1127.7 75.3l-1.1 0.8M1103.0 151.1l0.0 -2.1M1080.5 101.6l-0.1 -0.9M1123.6 96.2l1.2 0.7M1077.0 112.7l-0.2 -1.4M1067.8 139.9l-0.5 -2.3M1132.4 134.7l1.3 -1.2M1087.9 73.2l-0.9 -1.6M1084.4 132.2l0.9 -2.2M1109.8 153.0l1.5 1.0M1074.3 135.6l-1.0 1.9M1123.4 125.7l-0.3 1.1M1084.0 101.6l1.9 -1.3M1115.8 123.4l1.2 0.4M1136.6 132.2l-1.1 1.0M1118.9 119.3l0.5 -0.8M1087.9 148.5l0.2 -1.1M1074.5 120.5l1.7 -1.8M1122.8 112.2l-0.9 0.1M1116.9 71.0l0.8 -1.4M1141.7 109.5l0.1 1.8M1054.3 116.9l-1.2 -0.2M1133.4 108.0l2.1 0.1M1072.6 129.8l0.7 1.4M1085.1 69.0l0.0 1.1M1063.3 134.7l-1.0 -1.8M1077.1 66.7l2.4 0.2M1121.8 131.2l0.1 -1.0M1125.8 89.6l-1.8 0.9M1106.1 129.2l-2.1 -1.3M1082.8 80.9l-2.3 0.7M1115.1 111.5l0.4 0.9M1100.5 72.2l-0.7 -2.2M1084.5 93.9l0.9 -0.9M1075.0 67.1l-0.6 2.0M1144.0 100.0l1.6 -0.1M1090.7 143.1l-0.8 1.5M1138.1 133.0l-0.6 1.0M1135.9 133.8l1.4 2.0M1122.2 79.2l-0.6 -1.4M1059.2 105.7l-1.1 0.9M1089.1 68.9l1.4 -1.9M1136.3 99.0l1.6 -0.7M1066.3 129.4l0.5 -0.9M1074.4 107.8l0.5 2.5M1117.3 64.2l-0.2 -1.2M1104.1 69.0l0.3 0.8M1104.1 142.3l0.2 1.9M1139.5 123.4l0.4 1.0M1124.4 143.6l-2.4 0.7M1057.0 92.1l0.8 -0.4M1125.7 70.4l-0.6 -1.5M1077.7 99.4l-1.9 0.3M1087.9 69.7l0.1 -0.9M1099.4 59.9l0.2 1.5M1090.7 134.7l1.0 -1.8M1130.8 135.4l-0.4 -1.3M1064.5 111.2l1.7 0.7M1138.3 131.6l-1.3 -0.3M1081.0 84.6l1.0 -0.2M1060.7 96.1l-0.7 0.7M1123.1 129.6l0.2 -2.6M1119.9 101.3l1.8 -1.5M1108.6 72.8l0.6 0.5M1087.7 100.7l-0.9 -0.8M1103.9 76.8l-1.7 -0.9M1080.0 90.2l0.8 -0.5M1131.5 120.9l-0.3 -1.7M1109.5 95.5l0.6 0.5M1058.4 122.7l-0.5 0.8M1118.1 144.6l-0.6 2.3M1086.3 146.0l1.0 2.3M1095.9 128.2l1.3 1.2M1065.4 135.1l-0.7 0.7M1084.8 99.4l-0.7 -1.7M1108.8 116.5l1.4 0.8M1091.4 132.0l-1.9 1.0M1065.1 110.2l-1.7 0.6M1052.1 108.3l1.7 1.1M1082.2 130.7l-1.5 0.2M1093.8 83.6l1.0 2.2M1131.0 76.8l1.7 0.8M1114.8 137.7l-1.7 -0.7M1117.5 131.7l1.1 1.6M1080.1 126.1l-0.6 1.0M1114.5 90.0l2.0 1.0M1107.0 141.5l1.6 -0.7M1071.4 143.4l-1.0 1.2M1132.0 141.8l-1.0 0.7M1077.2 67.7l-1.4 -1.1M1135.4 117.8l-0.9 0.9M1085.6 72.6l2.5 -0.2M1108.6 82.4l0.7 0.7M1056.7 99.3l-0.8 0.1M1084.7 63.2l-2.4 -0.1M1116.8 127.7l-1.3 1.6M1138.9 95.9l2.4 -0.7M1105.6 71.6l-1.2 -2.2M1058.4 104.6l1.3 -1.0M1104.1 120.4l-1.0 -0.4M1087.9 125.3l0.9 -1.4M1131.7 130.3l1.5 -2.1M1071.5 75.4l-0.6 1.7M1101.3 153.6l1.1 -0.8M1124.4 136.9l1.6 -0.8M1110.5 74.3l-1.6 -1.1M1113.5 94.3l0.8 -0.8M1060.9 126.8l-0.1 -1.2M1068.0 100.3l2.2 -0.8M1096.7 141.1l0.4 -2.3M1072.0 120.5l0.4 1.2M1072.9 110.0l1.0 0.2M1073.4 108.5l-1.0 -1.4M1080.6 77.8l1.3 -0.7M1121.8 74.1l0.5 1.3M1100.6 131.2l-0.8 0.4M1083.2 65.9l0.8 0.6M1085.3 118.6l-1.4 0.8M1069.5 72.5l1.9 -1.6M1141.5 119.9l-2.5 -0.0M1090.3 153.5l-0.6 -1.5M1071.7 106.9l0.7 -1.1M1088.6 81.5l1.3 0.8M1062.3 88.1l-0.5 -1.0M1121.2 142.3l-0.4 -0.7M1084.4 68.4l-1.4 0.1M1108.5 148.5l0.5 1.0M1098.2 130.0l1.7 -0.8M1090.0 143.0l1.4 0.8M1130.7 126.7l-1.5 1.9M1102.0 154.0l-1.5 -1.0M1067.3 115.0l-0.1 -1.4M1105.3 131.0l-0.3 1.6M1105.6 134.7l-0.4 -0.7M1060.1 97.2l-0.8 -1.8M1137.0 133.7l1.2 1.2M1057.6 102.8l0.6 -0.6M1139.9 132.3l0.7 -0.5M1064.0 135.4l1.3 -0.5M1126.3 75.9l-0.9 0.6M1139.5 100.8l0.5 2.1M1141.1 83.5l-0.3 1.7M1128.3 83.7l1.7 0.4M1115.2 144.2l1.6 1.2M1118.4 74.9l-1.5 -0.1M1085.1 66.9l2.0 -1.5M1092.8 88.2l1.3 -1.9M1080.0 98.6l-2.6 0.3M1143.8 95.6l-2.2 0.1M1119.0 103.8l-1.0 2.4M1106.9 61.1l0.7 -1.3M1097.6 135.4l-0.1 1.7M1056.3 95.8l-1.0 -1.5M1107.4 87.2l0.2 1.6M1130.7 139.0l1.7 1.0M1100.8 74.0l-0.1 1.9M1126.3 104.7l0.2 1.5M1106.7 129.6l-1.3 0.5M1142.7 91.4l-0.2 2.0M1102.9 152.8l1.9 -0.0M1127.5 69.6l1.5 1.0M1063.1 80.0l0.9 -0.7M1085.0 108.1l-0.2 0.8M1117.8 66.5l-1.6 -1.3M1113.4 88.4l0.9 0.6M1085.5 94.3l1.0 0.8M1102.7 146.7l0.6 0.8M1088.6 89.0l1.0 -1.9M1064.6 89.9l0.8 1.5M1114.9 115.6l-0.2 -1.0M1114.9 76.1l2.3 1.2M1143.4 126.3l-1.5 -0.1M1123.3 97.4l1.4 0.0M1053.8 114.3l0.4 1.4M1139.5 126.3l0.8 0.4M1086.4 81.8l-0.8 0.2M1086.8 96.0l-1.2 -1.1M1070.2 107.7l1.7 -1.0M1061.5 79.8l-1.0 0.4M1062.6 118.1l-0.0 -1.1M1080.0 87.5l-0.0 -2.1M1116.9 75.8l1.7 1.7M1128.7 85.3l1.4 -1.9M1074.1 84.6l2.0 -0.5M1085.4 82.8l0.8 -0.6M1084.2 144.9l-0.2 1.1M1106.0 125.6l-0.6 -1.7M1109.7 137.6l-0.9 1.0M1135.4 101.5l-2.2 0.7M1080.9 143.6l0.2 -1.4M1096.4 138.3l-0.5 1.2M1135.0 87.7l0.2 1.8M1131.2 74.7l1.0 0.4M1099.7 85.0l0.4 1.9M1120.5 147.3l0.6 -1.0" stroke="#fff" stroke-width="1" fill="none" opacity="0.8"/>
<path d="M1131.6 76.4l-2.8 -1.8M1055.1 130.8l-2.7 -0.7M1143.2 136.2l2.2 0.7M1128.5 65.3l1.6 1.1M1064.3 77.8l3.7 1.1M1083.5 153.5l-3.7 0.7M1049.6 107.8l-0.9 -1.7M1072.2 144.9l1.5 2.0M1071.8 147.1l-0.5 2.4M1075.5 69.3l-0.5 2.1M1061.1 120.5l0.4 -3.0M1143.3 86.0l-0.4 2.5M1085.7 153.1l-0.6 -3.7M1104.4 160.1l-1.3 -1.6M1100.1 153.3l-0.7 1.9M1055.7 98.4l2.9 -0.4M1096.6 153.9l-1.5 0.4M1067.5 69.3l-1.2 -1.2M1138.7 88.3l0.0 -3.3M1146.4 121.1l2.8 2.1M1139.1 114.5l2.1 -0.6M1072.7 143.8l2.1 0.9M1145.7 102.8l3.4 -0.5M1089.9 147.9l2.8 0.3M1060.9 120.8l2.2 1.2M1110.3 60.7l0.4 -2.0M1121.8 60.1l0.6 1.6M1101.7 57.5l-0.4 1.7M1132.9 78.7l0.6 3.8M1130.1 139.8l1.5 -0.4M1120.3 151.0l-1.5 2.4M1079.9 58.8l-2.7 -0.0M1131.9 132.0l2.0 1.4M1075.5 65.0l-1.6 1.1M1149.0 114.4l1.9 0.5M1133.2 76.2l0.3 -2.2M1054.6 96.5l1.3 -3.3M1059.8 91.1l1.5 2.7M1145.2 111.1l0.7 -2.5M1097.4 65.6l-1.6 0.8M1068.9 146.6l-2.8 -0.7M1055.3 82.6l0.4 1.9M1116.6 67.5l2.4 -2.2M1050.7 106.0l2.7 -0.6M1054.6 95.4l2.4 2.6M1111.4 65.2l0.7 1.8M1139.4 91.8l2.7 2.9M1079.2 147.7l-0.3 2.2M1087.8 60.9l1.8 0.0M1062.2 87.7l2.3 -2.4M1144.6 118.0l1.7 -2.3M1145.7 105.6l-0.1 3.7M1133.8 146.4l1.2 3.1M1109.1 147.5l2.9 -0.8M1104.0 64.8l1.8 1.6M1074.1 151.3l-1.7 0.1M1104.5 59.7l-2.5 2.5M1101.0 55.5l1.9 1.3M1102.9 155.8l0.8 -2.8M1061.2 125.8l-2.3 -0.7M1081.0 149.0l-3.1 0.3M1131.9 146.1l3.1 2.4M1114.1 67.9l1.9 -2.7M1069.8 146.5l-0.5 3.0M1073.1 67.1l-2.5 -0.5M1140.2 85.8l-2.4 1.8M1121.8 70.3l-1.1 1.1M1073.2 142.1l0.8 -3.0M1133.2 144.3l-0.8 1.8M1149.3 103.3l0.6 -1.5M1058.0 79.4l-2.8 -2.8M1058.7 80.8l-1.6 0.3M1113.5 148.8l2.1 0.3M1124.2 67.7l-2.0 2.5M1145.6 103.5l1.4 -2.0M1136.1 134.0l-1.4 2.6M1070.6 75.7l-1.4 -3.3M1138.5 142.6l1.7 -0.3M1052.6 118.3l-2.6 -2.2M1053.4 115.2l0.1 1.7M1142.2 89.6l-1.9 -2.2M1135.2 126.6l1.7 -0.8M1121.5 67.7l3.9 -1.0M1147.2 84.3l-1.6 0.9M1079.5 151.8l-0.4 1.8M1136.1 126.7l2.7 0.3M1140.4 91.9l-2.9 -0.7M1121.4 153.8l2.5 -0.1M1058.9 107.6l-2.3 2.0M1146.0 122.5l-2.7 2.3M1084.8 152.0l2.5 0.8M1065.5 130.3l3.5 -0.6M1059.3 108.5l-2.1 2.3M1116.9 68.1l-2.5 -1.0M1133.9 80.8l1.5 1.2M1144.4 106.8l2.4 1.5M1139.7 91.0l-0.2 1.8M1056.3 96.5l-2.2 0.5M1114.5 150.4l0.4 1.5M1066.6 78.9l1.0 3.6M1105.1 67.5l-1.2 1.3M1121.5 149.5l-0.2 2.2M1098.5 153.2l-2.9 -1.7M1149.3 104.3l1.1 1.2M1076.1 143.8l-1.7 0.1M1087.7 66.4l-1.2 1.7M1123.5 143.1l1.1 -1.6M1145.1 87.3l1.4 2.7M1141.9 121.0l3.3 0.8M1056.4 101.6l-2.1 2.5M1133.3 79.6l2.1 -1.5M1103.8 149.2l-2.0 1.3M1065.0 84.7l-2.8 0.4M1124.1 146.2l1.4 0.9M1092.8 154.7l1.7 -0.8M1143.4 80.9l1.0 -3.8M1132.6 67.7l-2.7 0.3M1057.6 103.4l2.6 1.1M1145.9 125.7l-0.6 -2.6M1136.1 125.5l-3.3 1.3" stroke="#2a5b9a" stroke-width="1.1" fill="none" opacity="0.85"/>
<g transform="translate(1118.1 107.5) rotate(0)"><ellipse cx="0" cy="0" rx="3.8" ry="10" fill="#dbe5f1" opacity="0.7"/><path d="M-2 -7L3 -8M-2 -3L3 -3.5M-2 1L3 1M-2 5L3 5.5" stroke="#2a5b9a" stroke-width="0.8" opacity="0.6"/></g>
<g transform="translate(1099.6 126.0) rotate(90)"><ellipse cx="0" cy="0" rx="3.8" ry="10" fill="#dbe5f1" opacity="0.7"/><path d="M-2 -7L3 -8M-2 -3L3 -3.5M-2 1L3 1M-2 5L3 5.5" stroke="#2a5b9a" stroke-width="0.8" opacity="0.6"/></g>
<g transform="translate(1081.1 107.5) rotate(180)"><ellipse cx="0" cy="0" rx="3.8" ry="10" fill="#dbe5f1" opacity="0.7"/><path d="M-2 -7L3 -8M-2 -3L3 -3.5M-2 1L3 1M-2 5L3 5.5" stroke="#2a5b9a" stroke-width="0.8" opacity="0.6"/></g>
<g transform="translate(1099.6 89.0) rotate(270)"><ellipse cx="0" cy="0" rx="3.8" ry="10" fill="#dbe5f1" opacity="0.7"/><path d="M-2 -7L3 -8M-2 -3L3 -3.5M-2 1L3 1M-2 5L3 5.5" stroke="#2a5b9a" stroke-width="0.8" opacity="0.6"/></g>
<path d="M1085.6 93.5Q1099.6 96.5 1113.6 93.5Q1110.6 107.5 1113.6 121.5Q1099.6 118.5 1085.6 121.5Q1088.6 107.5 1085.6 93.5Z" fill="#fff"/>
<circle cx="1099.6" cy="107.5" r="6.8" fill="#2a5b9a"/>
<circle cx="1090.1" cy="98.0" r="1.4" fill="#2a5b9a"/>
<circle cx="1109.1" cy="98.0" r="1.4" fill="#2a5b9a"/>
<circle cx="1090.1" cy="117.0" r="1.4" fill="#2a5b9a"/>
<circle cx="1109.1" cy="117.0" r="1.4" fill="#2a5b9a"/>
<g fill="none" stroke-width="1.9" stroke-linecap="butt"><path d="M1078.5 174.2C1076 171 1071.5 170.8 1068 171.3C1063.5 172 1062.5 175 1062.7 177.3C1063 181 1067 181.6 1071 182.4C1076 183.4 1079 185 1078.8 188.3C1078.6 191.6 1075 193.3 1070.5 193.2C1066.5 193.1 1063.5 191.8 1061.8 189.5" stroke="#2e5f9e"/><path d="M1079.5 171L1090 193.5M1101 171L1091 196C1089.5 199.6 1088 200.8 1084 200.8H1062" stroke="#2e5f9e"/><path d="M1104.8 171V193.5M1104.8 179C1105.5 174 1109 171.3 1113.7 171.3" stroke="#2e5f9e"/><path d="M1115 182.2H1134C1134 175 1130 171 1124.5 171C1118.5 171 1115 176 1115 182.2C1115 188.5 1118.5 193.3 1124.5 193.3C1128.5 193.3 1131.5 191.5 1133.5 188.6" stroke="#e59a2c"/></g></svg><svg style="position:absolute;left:0;top:0" width="1208" height="684">
<rect x="756.5" y="245.5" width="431.7" height="430.8" fill="#fff"/>
<g stroke="#e2e2e2" stroke-width="1" fill="none"><path d="M776.5 245.5V676.3" /><path d="M756.5 250.5H1188.2" /><path d="M834.5 245.5V676.3" /><path d="M756.5 308.5H1188.2" /><path d="M892.5 245.5V676.3" /><path d="M756.5 366.5H1188.2" /><path d="M950.5 245.5V676.3" /><path d="M756.5 424.5H1188.2" /><path d="M1009.5 245.5V676.3" /><path d="M756.5 482.5H1188.2" /><path d="M1067.5 245.5V676.3" /><path d="M756.5 541.5H1188.2" /><path d="M1125.5 245.5V676.3" /><path d="M756.5 599.5H1188.2" /><path d="M1183.5 245.5V676.3" /><path d="M756.5 657.5H1188.2" /></g>
<g stroke="#262626" stroke-width="1" fill="none"><rect x="756.5" y="245.5" width="431.7" height="430.8"/><path d="M776.4 676.3v-4M776.4 245.5v4M756.5 250.3h4M1188.2 250.3h-4M834.5 676.3v-4M834.5 245.5v4M756.5 308.4h4M1188.2 308.4h-4M892.7 676.3v-4M892.7 245.5v4M756.5 366.6h4M1188.2 366.6h-4M950.8 676.3v-4M950.8 245.5v4M756.5 424.8h4M1188.2 424.8h-4M1009.0 676.3v-4M1009.0 245.5v4M756.5 482.9h4M1188.2 482.9h-4M1067.2 676.3v-4M1067.2 245.5v4M756.5 541.0h4M1188.2 541.0h-4M1125.3 676.3v-4M1125.3 245.5v4M756.5 599.2h4M1188.2 599.2h-4M1183.5 676.3v-4M1183.5 245.5v4M756.5 657.4h4M1188.2 657.4h-4"/></g>
<g stroke="#000" stroke-width="2.45" fill="none" stroke-linejoin="round"><path d="M878.3 465.3L878.3 465.2L878.2 465.1L878.2 465.0L878.2 464.9L878.1 464.8L878.1 464.6L878.1 464.5L878.1 464.4L878.0 464.3L878.0 464.2L878.0 464.1L878.0 464.0L878.0 463.9L877.9 463.8L877.9 463.7L877.9 463.6L877.9 463.5L877.9 463.3L877.9 463.2L877.9 463.1L877.9 463.0L877.9 462.9L877.8 462.8L877.8 462.7L877.8 462.6L877.8 462.5L877.8 462.3L877.8 462.2L877.8 462.1L877.8 462.0L877.9 461.9L877.9 461.8L877.9 461.7L877.9 461.6L877.9 461.5L877.9 461.4L877.9 461.2L877.9 461.1L877.9 461.0L878.0 460.9L878.0 460.8L878.0 460.7L878.0 460.6L878.0 460.5L878.1 460.4L878.1 460.3L878.1 460.2L878.2 460.1L878.2 459.9L878.2 459.8L878.2 459.7L878.3 459.6L878.3 459.5L878.3 459.4L878.4 459.3L878.4 459.2L878.5 459.1L878.5 459.0L878.6 458.9L878.6 458.8L878.6 458.7L878.7 458.6L878.7 458.5L878.8 458.4L878.8 458.3L878.9 458.2L878.9 458.1L879.0 458.0L879.0 457.9L879.1 457.8L879.2 457.7L879.2 457.6L879.3 457.5L879.3 457.4L879.4 457.4L879.5 457.3L879.5 457.2L879.6 457.1L879.7 457.0L879.7 456.9L879.8 456.8L879.9 456.7L879.9 456.6L880.0 456.6L880.1 456.5L880.1 456.4L880.2 456.3L880.3 456.2L880.4 456.2L880.4 456.1L880.5 456.0L880.6 455.9L880.7 455.8L880.8 455.8L880.9 455.7L880.9 455.6L881.0 455.5L881.1 455.5L881.2 455.4L881.3 455.3L881.4 455.3L881.4 455.2L881.5 455.1L881.6 455.1L881.7 455.0L881.8 454.9L881.9 454.9L882.0 454.8L882.1 454.8L882.2 454.7L882.3 454.7L882.4 454.6L882.5 454.5L882.6 454.5L882.7 454.4L882.8 454.4L882.9 454.3L883.0 454.3L883.1 454.2L883.2 454.2L883.3 454.2L883.4 454.1L883.5 454.1L883.6 454.0L883.7 454.0L883.8 453.9L883.9 453.9L884.0 453.9L884.1 453.8L884.2 453.8L884.3 453.8L884.4 453.7L884.5 453.7L884.6 453.7L884.7 453.7L884.8 453.6L884.9 453.6L885.1 453.6L885.2 453.6L885.3 453.5L885.4 453.5L885.5 453.5L885.6 453.5L885.7 453.5L885.8 453.5L885.9 453.5L886.0 453.4L886.1 453.4L886.3 453.4L886.4 453.4L886.5 453.4L886.6 453.4L886.7 453.4L886.8 453.4L886.9 453.4L887.0 453.4L887.1 453.4L887.3 453.4L887.4 453.4L887.5 453.4L887.6 453.4L887.7 453.5L887.8 453.5L887.9 453.5L888.0 453.5L888.1 453.5L888.2 453.5L888.4 453.5L888.5 453.6L888.6 453.6L888.7 453.6L888.8 453.6L888.9 453.7L889.0 453.7L889.1 453.7L889.2 453.7L889.3 453.8L889.4 453.8L889.5 453.8L889.6 453.9L889.7 453.9L889.8 453.9L890.0 454.0L890.1 454.0L890.2 454.0L890.3 454.1L890.4 454.1L890.5 454.2L890.6 454.2L890.7 454.3L890.8 454.3L890.9 454.4L891.0 454.4L891.1 454.5L891.2 454.5L891.3 454.6L891.3 454.6L892.8 455.4L892.8 455.5L894.5 456.5L894.6 456.5L896.3 457.5L896.3 457.5L898.0 458.5L898.1 458.6L899.7 459.6L899.8 459.7L901.1 460.5L901.2 460.5L901.3 460.6L901.4 460.7L901.5 460.7L901.6 460.8L901.7 460.9L901.8 460.9L901.8 461.0L901.9 461.1L902.0 461.1L902.1 461.2L902.2 461.3L902.3 461.3L902.3 461.4L902.4 461.5L902.5 461.5L902.6 461.6L902.7 461.7L902.7 461.8L902.8 461.9L902.9 461.9L903.0 462.0L903.0 462.1L903.1 462.2L903.2 462.3L903.3 462.3L903.3 462.4L903.4 462.5L903.5 462.6L903.5 462.7L903.6 462.8L903.7 462.9L903.7 462.9L903.8 463.0L903.8 463.1L903.9 463.2L904.0 463.3L904.0 463.4L904.1 463.5L904.1 463.6L904.2 463.7L904.2 463.8L904.3 463.9L904.3 464.0L904.4 464.1L904.4 464.2L904.5 464.3L904.5 464.3L904.6 464.5L904.6 464.5L904.7 464.7L904.7 464.8L905.1 465.8L905.2 465.9L905.5 466.7L905.5 466.8L905.9 467.6L905.9 467.7L906.3 468.6L906.3 468.6L906.7 469.5L906.8 469.5L907.2 470.4L907.2 470.5L907.6 471.3L907.6 471.4L908.0 472.2L908.1 472.3L908.5 473.1L908.5 473.2L908.9 474.0L909.0 474.1L909.4 474.9L909.4 475.0L909.8 475.8L909.9 475.9L910.3 476.7L910.4 476.8L910.8 477.6L910.8 477.6L911.3 478.5L911.3 478.5L911.8 479.3L911.8 479.4L912.3 480.2L912.3 480.3L912.8 481.1L912.9 481.1L913.3 481.9L913.4 482.0L913.9 482.8L913.9 482.9L914.4 483.6L914.5 483.7L915.0 484.5L915.0 484.6L915.5 485.3L915.5 485.4L916.1 486.2L916.1 486.2L916.6 487.0L916.7 487.1L917.2 487.8L917.3 487.9L917.8 488.7L917.8 488.7L918.4 489.5L918.4 489.5L919.0 490.3L919.0 490.3L919.6 491.1L919.6 491.2L920.2 491.9L920.2 492.0L920.8 492.7L920.8 492.8L921.4 493.5L921.5 493.5L922.1 494.3L922.1 494.3L922.7 495.0L922.7 495.1L923.3 495.8L923.4 495.9L924.0 496.6L924.0 496.7L924.6 497.4L924.7 497.4L925.3 498.1L925.4 498.2L926.0 498.9L926.0 498.9L926.7 499.6L926.7 499.7L927.3 500.4L927.4 500.4L928.0 501.1L928.1 501.1L928.7 501.8L928.8 501.9L929.4 502.5L929.5 502.6L930.1 503.3L930.2 503.3L930.8 504.0L930.9 504.0L931.6 504.7L931.6 504.7L932.3 505.4L932.4 505.4L933.0 506.1L933.1 506.1L933.8 506.7L933.8 506.8L934.5 507.4L934.6 507.5L935.3 508.1L935.3 508.1L936.0 508.8L936.1 508.8L936.8 509.4L936.9 509.5L937.6 510.1L937.6 510.1L938.3 510.7L938.4 510.8L939.1 511.4L939.2 511.4L939.9 512.0L940.0 512.0L940.7 512.6L940.8 512.7L941.5 513.2L941.5 513.3L942.3 513.8L942.4 513.9L943.1 514.4L943.2 514.5L943.9 515.0L944.0 515.1L944.7 515.6L944.8 515.7L945.5 516.2L945.6 516.3L946.4 516.8L946.4 516.8L947.2 517.3L947.3 517.4L948.0 517.9L948.1 518.0L948.9 518.5L949.0 518.5L949.7 519.0L949.8 519.1L950.6 519.5L950.7 519.6L951.4 520.1L951.5 520.1L952.3 520.6L952.4 520.6L953.2 521.1L953.2 521.2L954.0 521.6L954.1 521.7L954.9 522.1L955.0 522.2L955.8 522.6L955.9 522.7L956.7 523.1L956.7 523.1L957.6 523.6L957.6 523.6L958.5 524.1L958.5 524.1L959.4 524.5L959.4 524.6L960.3 525.0L960.3 525.0L961.2 525.4L961.2 525.5L962.1 525.9L962.1 525.9L963.0 526.3L963.0 526.3L963.9 526.7L964.0 526.7L964.8 527.1L964.9 527.2L965.7 527.5L965.8 527.6L966.7 527.9L966.7 528.0L967.6 528.3L967.7 528.3L968.5 528.7L968.6 528.7L968.7 528.8L968.7 528.8L968.9 528.8L969.0 528.9L969.1 528.9L969.2 529.0L969.3 529.0L969.4 529.1L969.5 529.1L969.6 529.2L969.6 529.2L969.7 529.3L969.8 529.3L969.9 529.4L970.0 529.4L970.1 529.5L970.2 529.5L970.3 529.6L970.4 529.7L970.5 529.7L970.6 529.8L970.7 529.9L970.7 529.9L970.8 530.0L970.9 530.0L971.0 530.1L971.1 530.2L971.2 530.3L971.2 530.3L971.3 530.4L971.4 530.5L971.5 530.5L971.6 530.6L971.7 530.7L971.7 530.8L971.8 530.8L971.9 530.9L972.0 531.0L972.0 531.1L972.1 531.2L972.2 531.2L972.2 531.3L972.3 531.4L972.4 531.5L972.4 531.6L972.5 531.7L972.6 531.7L972.6 531.8L972.7 531.9L972.8 532.0L972.8 532.1L972.9 532.2L973.0 532.3L973.0 532.4L973.8 533.7L973.9 533.7L974.9 535.4L974.9 535.5L975.9 537.1L976.0 537.2L977.0 538.9L977.0 538.9L978.0 540.6L978.1 540.7L978.9 542.2L978.9 542.2L979.0 542.3L979.0 542.4L979.1 542.5L979.1 542.6L979.2 542.7L979.2 542.8L979.3 542.9L979.3 543.0L979.4 543.1L979.4 543.2L979.5 543.3L979.5 543.4L979.5 543.5L979.6 543.7L979.6 543.8L979.6 543.9L979.7 544.0L979.7 544.1L979.7 544.2L979.8 544.3L979.8 544.4L979.8 544.5L979.8 544.6L979.9 544.7L979.9 544.8L979.9 544.9L979.9 545.0L980.0 545.1L980.0 545.3L980.0 545.4L980.0 545.5L980.0 545.6L980.0 545.7L980.0 545.8L980.1 545.9L980.1 546.0L980.1 546.1L980.1 546.2L980.1 546.4L980.1 546.5L980.1 546.6L980.1 546.7L980.1 546.8L980.1 546.9L980.1 547.0L980.1 547.1L980.1 547.2L980.1 547.4L980.1 547.5L980.0 547.6L980.0 547.7L980.0 547.8L980.0 547.9L980.0 548.0L980.0 548.1L980.0 548.2L979.9 548.3L979.9 548.4L979.9 548.6L979.9 548.7L979.8 548.8L979.8 548.9L979.8 549.0L979.8 549.1L979.7 549.2L979.7 549.3L979.7 549.4L979.6 549.5L979.6 549.6L979.6 549.7L979.5 549.8L979.5 549.9L979.4 550.0L979.4 550.1L979.3 550.2L979.3 550.3L979.3 550.4L979.2 550.5L979.2 550.6L979.1 550.7L979.1 550.8L979.0 550.9L979.0 551.0L978.9 551.1L978.8 551.2L978.8 551.3L978.7 551.4L978.7 551.5L978.6 551.6L978.6 551.7L978.5 551.8L978.4 551.9L978.4 552.0L978.3 552.1L978.2 552.1L978.2 552.2L978.1 552.3L978.0 552.4L978.0 552.5L977.9 552.6L977.8 552.6L977.7 552.7L977.7 552.8L977.6 552.9L977.5 553.0L977.4 553.1L977.3 553.1L977.3 553.2L977.2 553.3L977.1 553.4L977.0 553.4L976.9 553.5L976.9 553.6L976.8 553.6L976.7 553.7L976.6 553.8L976.5 553.8L976.4 553.9L976.3 554.0L976.2 554.0L976.1 554.1L976.1 554.2L976.0 554.2L975.9 554.3L975.8 554.3L975.7 554.4L975.6 554.5L975.5 554.5L975.4 554.6L975.3 554.6L975.2 554.7L975.1 554.7L975.0 554.8L974.9 554.8L974.8 554.9L974.7 554.9L974.6 554.9L974.5 555.0L974.4 555.0L974.3 555.1L974.2 555.1L974.1 555.2L974.0 555.2L973.9 555.2L973.8 555.3L973.7 555.3L973.6 555.3L973.4 555.3L973.3 555.4L973.2 555.4L973.1 555.4L973.0 555.5L972.9 555.5L972.8 555.5L972.7 555.5L972.6 555.5L972.5 555.6L972.4 555.6L972.3 555.6L972.1 555.6L972.0 555.6L971.9 555.6L971.8 555.6L971.7 555.6L971.6 555.6L971.5 555.7L971.4 555.7L971.3 555.7L971.2 555.7L971.0 555.7L970.9 555.7L970.8 555.7L970.7 555.7L970.6 555.6L970.5 555.6L970.4 555.6L970.3 555.6L970.2 555.6L970.0 555.6L969.9 555.6L969.8 555.6L969.7 555.6L969.6 555.5L969.5 555.5L969.4 555.5L969.3 555.5L969.2 555.5L969.1 555.4L969.0 555.4L968.9 555.4L968.7 555.4L968.6 555.3L968.5 555.3L968.4 555.3L968.3 555.2L968.2 555.2L967.3 554.9L967.2 554.9L966.2 554.5L966.1 554.5L965.0 554.1L964.9 554.1L963.9 553.7L963.8 553.7L962.7 553.3L962.6 553.2L961.6 552.8L961.5 552.8L960.4 552.4L960.3 552.4L959.3 551.9L959.2 551.9L958.1 551.5L958.1 551.4L957.0 551.0L956.9 551.0L955.9 550.5L955.8 550.5L954.8 550.0L954.7 550.0L953.6 549.5L953.6 549.5L952.5 549.0L952.5 549.0L951.4 548.5L951.3 548.4L950.3 547.9L950.2 547.9L949.2 547.4L949.1 547.4L948.1 546.9L948.0 546.8L947.0 546.3L947.0 546.3L945.9 545.7L945.9 545.7L944.9 545.1L944.8 545.1L943.8 544.6L943.7 544.5L942.7 544.0L942.6 543.9L941.7 543.3L941.6 543.3L940.6 542.7L940.5 542.7L939.5 542.1L939.5 542.1L938.5 541.5L938.4 541.4L937.4 540.8L937.4 540.8L936.4 540.2L936.3 540.1L935.4 539.5L935.3 539.5L934.4 538.8L934.3 538.8L933.3 538.2L933.3 538.1L932.3 537.5L932.3 537.4L931.3 536.8L931.2 536.7L930.3 536.1L930.2 536.0L929.3 535.3L929.3 535.3L928.3 534.6L928.3 534.6L927.3 533.9L927.3 533.8L926.4 533.1L926.3 533.1L925.4 532.4L925.3 532.3L924.4 531.6L924.4 531.6L923.5 530.9L923.4 530.8L922.5 530.1L922.5 530.0L921.6 529.3L921.5 529.3L920.7 528.5L920.6 528.5L919.7 527.7L919.7 527.7L918.8 526.9L918.7 526.9L917.9 526.1L917.8 526.0L917.0 525.3L916.9 525.2L916.1 524.4L916.0 524.4L915.2 523.6L915.1 523.5L914.3 522.7L914.2 522.7L913.4 521.9L913.4 521.8L912.5 521.0L912.5 521.0L911.7 520.2L911.6 520.1L910.8 519.3L910.8 519.2L910.0 518.4L909.9 518.3L909.1 517.5L909.1 517.4L908.3 516.6L908.3 516.5L907.5 515.7L907.4 515.6L906.7 514.8L906.6 514.7L905.9 513.9L905.8 513.8L905.1 512.9L905.0 512.9L904.3 512.0L904.2 511.9L903.5 511.1L903.4 511.0L902.7 510.1L902.7 510.0L901.9 509.2L901.9 509.1L901.2 508.2L901.1 508.1L900.4 507.2L900.4 507.2L899.7 506.2L899.6 506.2L898.9 505.3L898.9 505.2L898.2 504.3L898.2 504.2L897.5 503.3L897.5 503.2L896.8 502.3L896.8 502.2L896.1 501.3L896.1 501.2L895.4 500.3L895.4 500.2L894.7 499.2L894.7 499.2L894.1 498.2L894.0 498.1L893.4 497.2L893.3 497.1L892.7 496.1L892.7 496.1L892.1 495.1L892.0 495.0L891.5 494.1L891.4 494.0L890.8 493.0L890.8 492.9L890.2 491.9L890.2 491.9L889.6 490.9L889.6 490.8L889.0 489.8L889.0 489.7L888.4 488.7L888.4 488.7L887.8 487.7L887.8 487.6L887.3 486.6L887.2 486.5L886.7 485.5L886.7 485.4L886.1 484.4L886.1 484.3L885.6 483.3L885.6 483.2L885.1 482.2L885.0 482.1L884.5 481.1L884.5 481.0L884.0 480.0L884.0 479.9L883.5 478.8L883.5 478.8L883.0 477.7L883.0 477.7L882.5 476.6L882.5 476.5L882.1 475.5L882.0 475.4L881.6 474.3L881.6 474.3L881.2 473.2L881.1 473.1L880.7 472.0L880.7 472.0L880.3 470.9L880.2 470.8L879.9 469.8L879.8 469.7L879.4 468.6L879.4 468.5L879.0 467.4L879.0 467.4L878.6 466.3L878.6 466.2L878.3 465.3Z"/>
<path d="M912.5 521.0L930.2 503.3"/>
<path d="M834.1 446.1L834.1 446.1L834.1 445.9L834.0 445.8L834.0 445.7L834.0 445.6L834.0 445.4L834.0 445.3L834.0 445.2L834.0 445.1L834.0 444.9L834.0 444.8L834.0 444.7L834.0 444.6L834.0 444.5L834.0 444.3L834.0 444.2L834.0 444.1L834.0 444.0L834.0 443.9L834.0 443.7L834.1 443.6L834.1 443.5L834.1 443.4L834.1 443.2L834.1 443.1L834.1 443.0L834.2 442.9L834.2 442.7L834.2 442.6L834.2 442.5L834.3 442.4L834.3 442.3L834.3 442.2L834.4 442.0L834.4 441.9L834.4 441.8L834.5 441.7L834.5 441.6L834.5 441.5L834.6 441.3L834.6 441.2L834.7 441.1L834.7 441.0L834.8 440.9L834.8 440.8L834.9 440.6L834.9 440.5L835.0 440.4L835.0 440.3L835.1 440.2L835.1 440.1L835.2 440.0L835.3 439.9L835.3 439.8L835.4 439.7L835.4 439.6L835.5 439.5L835.6 439.4L835.6 439.3L835.7 439.1L835.8 439.1L835.9 438.9L835.9 438.9L836.0 438.7L836.1 438.7L836.1 438.6L836.2 438.5L836.3 438.4L836.4 438.3L836.5 438.2L836.5 438.1L836.6 438.0L836.7 437.9L836.8 437.8L836.9 437.7L837.0 437.6L837.1 437.6L837.1 437.5L837.2 437.4L837.3 437.3L837.4 437.2L837.5 437.1L837.6 437.1L837.7 437.0L837.8 436.9L837.9 436.8L838.0 436.8L838.1 436.7L838.2 436.6L838.3 436.5L838.4 436.5L838.5 436.4L838.6 436.3L838.7 436.3L838.8 436.2L838.9 436.1L839.0 436.1L839.1 436.0L839.2 436.0L839.3 435.9L839.4 435.9L839.6 435.8L839.7 435.7L839.8 435.7L839.9 435.6L840.0 435.6L840.1 435.5L840.2 435.5L840.3 435.5L840.5 435.4L840.6 435.4L840.7 435.3L840.8 435.3L840.9 435.2L841.0 435.2L841.2 435.2L841.3 435.1L841.4 435.1L841.5 435.1L841.6 435.0L841.8 435.0L841.9 435.0L842.0 435.0L842.1 434.9L842.2 434.9L842.4 434.9L842.5 434.9L842.6 434.9L842.7 434.8L842.8 434.8L843.0 434.8L843.1 434.8L843.2 434.8L843.3 434.8L843.5 434.8L843.6 434.8L843.7 434.8L843.8 434.8L843.9 434.8L844.1 434.8L844.2 434.8L844.3 434.8L844.4 434.8L844.6 434.8L844.7 434.8L844.8 434.8L844.9 434.8L845.1 434.8L845.2 434.8L845.3 434.9L845.4 434.9L845.5 434.9L845.7 434.9L845.8 434.9L845.9 435.0L846.0 435.0L846.1 435.0L846.3 435.0L846.4 435.1L846.5 435.1L846.6 435.1L846.7 435.2L846.9 435.2L847.0 435.2L847.1 435.3L848.3 435.6L848.4 435.7L850.2 436.3L850.3 436.3L852.1 436.9L852.2 437.0L852.6 437.1L852.6 437.1L852.8 437.2L852.9 437.2L853.0 437.2L853.1 437.3L853.2 437.3L853.3 437.4L853.5 437.4L853.6 437.5L853.7 437.5L853.8 437.6L853.9 437.7L854.0 437.7L854.1 437.8L854.2 437.8L854.3 437.9L854.4 437.9L854.5 438.0L854.6 438.1L854.7 438.1L854.8 438.2L854.9 438.3L855.0 438.3L855.2 438.4L855.2 438.5L855.3 438.6L855.4 438.6L855.5 438.7L855.6 438.8L855.7 438.9L855.8 439.0L855.9 439.0L856.0 439.1L856.1 439.2L856.2 439.3L856.3 439.4L856.4 439.5L856.5 439.5L856.5 439.6L856.6 439.7L856.7 439.8L856.8 439.9L856.9 440.0L856.9 440.1L857.0 440.2L857.1 440.3L857.2 440.4L857.3 440.5L857.3 440.6L857.4 440.7L857.5 440.8L857.5 440.9L857.6 441.0L857.7 441.1L857.7 441.2L857.8 441.3L857.9 441.4L857.9 441.5L858.0 441.6L858.1 441.7L858.1 441.8L858.2 441.9L858.2 442.0L858.3 442.1L858.3 442.3L858.4 442.4L858.4 442.5L858.5 442.6L858.5 442.7L858.6 442.8L858.6 442.9L858.7 443.1L858.7 443.2L858.8 443.3L858.8 443.4L858.8 443.5L858.9 443.6L858.9 443.8L858.9 443.9L859.0 444.0L859.0 444.1L859.0 444.2L859.1 444.3L859.1 444.5L859.1 444.6L859.1 444.7L859.2 444.8L859.2 445.0L859.2 445.0L859.3 445.7L859.3 445.8L859.5 447.1L859.5 447.1L859.7 448.4L859.7 448.5L860.0 449.7L860.0 449.8L860.2 451.0L860.2 451.1L860.5 452.4L860.5 452.4L860.8 453.7L860.8 453.8L861.0 455.0L861.1 455.1L861.3 456.3L861.4 456.4L861.7 457.6L861.7 457.7L862.0 458.9L862.0 459.0L862.3 460.2L862.3 460.3L862.6 461.5L862.7 461.6L863.0 462.8L863.0 462.9L863.4 464.1L863.4 464.2L863.7 465.4L863.8 465.5L864.1 466.7L864.2 466.8L864.5 468.0L864.6 468.1L864.9 469.3L865.0 469.4L865.4 470.6L865.4 470.7L865.8 471.9L865.8 471.9L866.2 473.1L866.3 473.2L866.7 474.4L866.7 474.5L867.2 475.7L867.2 475.7L867.6 476.9L867.7 477.0L868.1 478.2L868.1 478.3L868.6 479.4L868.6 479.5L869.1 480.7L869.2 480.8L869.6 481.9L869.7 482.0L870.2 483.2L870.2 483.2L870.7 484.4L870.8 484.5L871.3 485.6L871.3 485.7L871.8 486.8L871.9 486.9L872.4 488.1L872.4 488.1L873.0 489.3L873.0 489.4L873.6 490.5L873.6 490.6L874.2 491.7L874.2 491.8L874.8 492.9L874.9 493.0L875.4 494.1L875.5 494.2L876.1 495.3L876.1 495.3L876.7 496.5L876.8 496.5L877.4 497.6L877.4 497.7L878.1 498.8L878.1 498.9L878.7 500.0L878.8 500.0L879.4 501.1L879.5 501.2L880.1 502.3L880.2 502.3L880.8 503.4L880.9 503.5L881.5 504.6L881.6 504.6L882.3 505.7L882.3 505.8L883.0 506.8L883.1 506.9L883.8 507.9L883.8 508.0L884.5 509.1L884.6 509.1L885.3 510.2L885.3 510.2L886.1 511.3L886.1 511.3L886.9 512.4L886.9 512.4L887.6 513.5L887.7 513.5L888.5 514.5L888.5 514.6L889.3 515.6L889.3 515.7L890.1 516.7L890.1 516.7L890.9 517.7L891.0 517.8L891.8 518.8L891.8 518.8L892.6 519.8L892.7 519.9L893.5 520.9L893.5 520.9L894.4 521.9L894.4 522.0L895.2 522.9L895.3 523.0L896.1 523.9L896.2 524.0L897.0 524.9L897.1 525.0L897.9 525.9L898.0 526.0L898.8 526.9L898.9 527.0L899.8 527.9L899.8 528.0L900.7 528.9L900.7 528.9L901.6 529.8L901.7 529.9L902.6 530.8L902.6 530.9L903.5 531.8L903.6 531.8L904.5 532.7L904.6 532.7L905.5 533.6L905.5 533.7L906.5 534.5L906.5 534.6L907.4 535.5L907.5 535.5L908.4 536.4L908.5 536.4L909.4 537.3L909.5 537.3L910.5 538.2L910.5 538.2L911.5 539.0L911.5 539.1L912.5 539.9L912.6 540.0L913.5 540.8L913.6 540.8L914.6 541.6L914.7 541.7L915.6 542.5L915.7 542.5L916.7 543.3L916.8 543.4L917.8 544.1L917.8 544.2L918.8 544.9L918.9 545.0L919.9 545.8L920.0 545.8L921.0 546.6L921.1 546.6L922.1 547.3L922.2 547.4L923.2 548.1L923.3 548.2L924.3 548.9L924.4 548.9L925.4 549.6L925.5 549.7L926.5 550.4L926.6 550.4L927.7 551.1L927.7 551.2L928.8 551.9L928.9 551.9L929.9 552.6L930.0 552.6L931.1 553.3L931.2 553.3L932.2 554.0L932.3 554.0L933.4 554.7L933.5 554.7L934.6 555.4L934.6 555.4L935.7 556.0L935.8 556.1L936.9 556.7L937.0 556.7L938.1 557.3L938.2 557.4L939.3 558.0L939.3 558.0L940.5 558.6L940.5 558.6L941.7 559.2L941.7 559.3L942.9 559.8L942.9 559.9L944.1 560.4L944.1 560.5L945.3 561.0L945.4 561.1L946.5 561.6L946.6 561.6L947.7 562.2L947.8 562.2L949.0 562.7L949.0 562.7L950.2 563.3L950.3 563.3L951.4 563.8L951.5 563.8L952.7 564.3L952.7 564.3L953.9 564.8L954.0 564.9L955.2 565.3L955.2 565.3L956.4 565.8L956.5 565.8L957.7 566.3L957.8 566.3L958.9 566.8L959.0 566.8L960.2 567.2L960.3 567.2L961.5 567.7L961.6 567.7L962.8 568.1L962.8 568.1L964.0 568.5L964.1 568.5L965.3 568.9L965.4 568.9L966.6 569.3L966.7 569.3L967.9 569.7L968.0 569.7L969.2 570.1L969.3 570.1L970.5 570.5L970.6 570.5L971.8 570.8L971.9 570.8L973.1 571.2L973.2 571.2L974.4 571.5L974.5 571.5L975.7 571.8L975.8 571.8L977.0 572.1L977.1 572.1L978.3 572.4L978.4 572.4L979.7 572.7L979.7 572.7L981.0 573.0L981.1 573.0L982.3 573.2L982.4 573.3L983.6 573.5L983.7 573.5L984.9 573.7L985.0 573.8L986.3 574.0L986.4 574.0L987.6 574.2L987.7 574.2L988.5 574.3L988.5 574.3L988.7 574.4L988.8 574.4L988.9 574.4L989.0 574.4L989.2 574.4L989.3 574.5L989.4 574.5L989.5 574.5L989.6 574.6L989.7 574.6L989.9 574.6L990.0 574.7L990.1 574.7L990.2 574.7L990.3 574.8L990.4 574.8L990.6 574.9L990.7 574.9L990.8 575.0L990.9 575.0L991.0 575.1L991.1 575.1L991.3 575.2L991.4 575.2L991.5 575.3L991.6 575.3L991.7 575.4L991.8 575.4L991.9 575.5L992.0 575.6L992.1 575.6L992.2 575.7L992.3 575.8L992.4 575.8L992.5 575.9L992.6 576.0L992.7 576.0L992.8 576.1L992.9 576.2L993.0 576.2L993.1 576.3L993.2 576.4L993.3 576.5L993.4 576.6L993.5 576.6L993.6 576.7L993.7 576.8L993.8 576.9L993.9 577.0L994.0 577.0L994.0 577.1L994.1 577.2L994.2 577.3L994.3 577.4L994.4 577.5L994.5 577.6L994.6 577.7L994.6 577.8L994.7 577.9L994.8 578.0L994.9 578.1L994.9 578.2L995.0 578.3L995.1 578.4L995.2 578.5L995.2 578.6L995.3 578.7L995.4 578.8L995.4 578.9L995.5 579.0L995.6 579.1L995.6 579.2L995.7 579.3L995.7 579.4L995.8 579.5L995.9 579.6L995.9 579.7L996.0 579.8L996.0 579.9L996.1 580.0L996.1 580.2L996.2 580.3L996.2 580.4L996.3 580.5L996.3 580.6L996.3 580.7L996.4 580.9L996.4 580.9L996.5 581.2L996.6 581.3L997.2 583.2L997.2 583.2L997.8 585.1L997.8 585.2L998.2 586.4L998.3 586.5L998.3 586.6L998.3 586.8L998.4 586.9L998.4 587.0L998.4 587.1L998.5 587.2L998.5 587.4L998.5 587.5L998.5 587.6L998.6 587.7L998.6 587.8L998.6 588.0L998.6 588.1L998.6 588.2L998.7 588.3L998.7 588.4L998.7 588.6L998.7 588.7L998.7 588.8L998.7 588.9L998.7 589.1L998.7 589.2L998.7 589.3L998.7 589.4L998.7 589.6L998.7 589.7L998.7 589.8L998.7 589.9L998.7 590.0L998.7 590.2L998.7 590.3L998.7 590.4L998.7 590.5L998.7 590.7L998.7 590.8L998.6 590.9L998.6 591.0L998.6 591.1L998.6 591.3L998.6 591.4L998.5 591.5L998.5 591.6L998.5 591.7L998.5 591.9L998.4 592.0L998.4 592.1L998.4 592.2L998.3 592.3L998.3 592.5L998.3 592.6L998.2 592.7L998.2 592.8L998.1 592.9L998.1 593.0L998.0 593.2L998.0 593.3L998.0 593.4L997.9 593.5L997.9 593.6L997.8 593.7L997.8 593.8L997.7 593.9L997.6 594.1L997.6 594.2L997.5 594.3L997.5 594.4L997.4 594.5L997.4 594.6L997.3 594.7L997.2 594.8L997.2 594.9L997.1 595.0L997.0 595.1L997.0 595.2L996.9 595.3L996.8 595.4L996.7 595.5L996.7 595.6L996.6 595.7L996.5 595.8L996.4 595.9L996.4 596.0L996.3 596.1L996.2 596.2L996.1 596.3L996.0 596.4L995.9 596.4L995.9 596.5L995.8 596.6L995.7 596.7L995.6 596.8L995.5 596.9L995.4 597.0L995.3 597.0L995.2 597.1L995.1 597.2L995.0 597.3L994.9 597.4L994.8 597.4L994.8 597.5L994.6 597.6L994.6 597.6L994.4 597.7L994.4 597.8L994.2 597.9L994.1 597.9L994.0 598.0L993.9 598.1L993.8 598.1L993.7 598.2L993.6 598.2L993.5 598.3L993.4 598.4L993.3 598.4L993.2 598.5L993.1 598.5L993.0 598.6L992.9 598.6L992.7 598.7L992.6 598.7L992.5 598.8L992.4 598.8L992.3 598.9L992.2 598.9L992.0 599.0L991.9 599.0L991.8 599.0L991.7 599.1L991.6 599.1L991.5 599.1L991.3 599.2L991.2 599.2L991.1 599.2L991.0 599.3L990.9 599.3L990.8 599.3L990.6 599.3L990.5 599.4L990.4 599.4L990.3 599.4L990.1 599.4L990.0 599.4L989.9 599.4L989.8 599.5L989.6 599.5L989.5 599.5L989.4 599.5L989.3 599.5L989.2 599.5L989.0 599.5L988.9 599.5L988.8 599.5L988.7 599.5L988.6 599.5L988.4 599.5L988.3 599.5L988.2 599.5L988.1 599.5L987.9 599.5L987.8 599.5L987.7 599.5L987.6 599.4L987.4 599.4L987.4 599.4L986.9 599.4L986.8 599.4L985.4 599.1L985.3 599.1L983.8 598.9L983.8 598.9L982.3 598.7L982.2 598.6L980.7 598.4L980.7 598.4L979.2 598.1L979.1 598.1L977.7 597.8L977.6 597.8L976.1 597.5L976.0 597.5L974.6 597.2L974.5 597.2L973.1 596.9L973.0 596.8L971.5 596.5L971.5 596.5L970.0 596.2L969.9 596.1L968.5 595.8L968.4 595.8L967.0 595.4L966.9 595.4L965.5 595.0L965.4 595.0L964.0 594.6L963.9 594.6L962.4 594.2L962.4 594.1L960.9 593.7L960.9 593.7L959.4 593.3L959.4 593.3L957.9 592.8L957.9 592.8L956.5 592.3L956.4 592.3L955.0 591.8L954.9 591.8L953.5 591.3L953.4 591.3L952.0 590.8L951.9 590.8L950.5 590.3L950.4 590.3L949.1 589.8L949.0 589.7L947.6 589.2L947.5 589.2L946.1 588.6L946.1 588.6L944.7 588.1L944.6 588.0L943.2 587.5L943.2 587.4L941.8 586.9L941.7 586.8L940.3 586.2L940.3 586.2L938.9 585.6L938.8 585.6L937.5 585.0L937.4 584.9L936.1 584.3L936.0 584.3L934.6 583.6L934.6 583.6L933.2 583.0L933.2 582.9L931.8 582.3L931.8 582.2L930.4 581.6L930.4 581.5L929.0 580.9L929.0 580.8L927.7 580.1L927.6 580.1L926.3 579.4L926.2 579.3L924.9 578.6L924.8 578.6L923.5 577.9L923.5 577.8L922.2 577.1L922.1 577.0L920.8 576.3L920.7 576.3L919.5 575.5L919.4 575.5L918.1 574.7L918.1 574.6L916.8 573.9L916.7 573.8L915.5 573.0L915.4 573.0L914.2 572.2L914.1 572.1L912.9 571.3L912.8 571.3L911.6 570.5L911.5 570.4L910.3 569.6L910.2 569.5L909.0 568.7L908.9 568.6L907.7 567.8L907.6 567.7L906.4 566.9L906.3 566.8L905.2 565.9L905.1 565.9L903.9 565.0L903.8 565.0L902.7 564.1L902.6 564.0L901.4 563.1L901.3 563.0L900.2 562.1L900.1 562.1L899.0 561.1L898.9 561.1L897.8 560.2L897.7 560.1L896.5 559.2L896.5 559.1L895.4 558.1L895.3 558.1L894.2 557.1L894.1 557.1L893.0 556.1L892.9 556.0L891.8 555.0L891.8 555.0L890.7 554.0L890.6 553.9L889.5 552.9L889.4 552.9L888.4 551.9L888.3 551.8L887.2 550.8L887.2 550.7L886.1 549.7L886.1 549.6L885.0 548.6L884.9 548.5L883.9 547.5L883.8 547.4L882.8 546.4L882.7 546.3L881.7 545.2L881.7 545.2L880.6 544.1L880.6 544.0L879.6 542.9L879.5 542.9L878.5 541.8L878.5 541.7L877.5 540.6L877.4 540.5L876.5 539.4L876.4 539.4L875.4 538.2L875.4 538.2L874.4 537.0L874.4 537.0L873.4 535.8L873.4 535.8L872.4 534.6L872.4 534.6L871.4 533.4L871.4 533.3L870.5 532.2L870.4 532.1L869.5 530.9L869.5 530.9L868.6 529.7L868.5 529.6L867.6 528.4L867.6 528.4L866.7 527.2L866.7 527.1L865.8 525.9L865.7 525.8L864.9 524.6L864.8 524.6L864.0 523.3L863.9 523.3L863.1 522.0L863.1 522.0L862.2 520.7L862.2 520.7L861.4 519.4L861.3 519.4L860.5 518.1L860.5 518.0L859.7 516.8L859.7 516.7L858.9 515.5L858.8 515.4L858.1 514.1L858.0 514.1L857.3 512.8L857.2 512.7L856.5 511.4L856.4 511.4L855.7 510.1L855.7 510.0L854.9 508.7L854.9 508.6L854.2 507.3L854.1 507.3L853.4 506.0L853.4 505.9L852.7 504.6L852.7 504.5L852.0 503.2L851.9 503.1L851.3 501.8L851.2 501.7L850.6 500.4L850.5 500.3L849.9 499.0L849.9 498.9L849.2 497.5L849.2 497.5L848.6 496.1L848.5 496.0L847.9 494.7L847.9 494.6L847.3 493.3L847.3 493.2L846.7 491.8L846.7 491.7L846.1 490.4L846.0 490.3L845.5 488.9L845.5 488.8L844.9 487.5L844.9 487.4L844.3 486.0L844.3 485.9L843.8 484.6L843.8 484.5L843.2 483.1L843.2 483.0L842.7 481.6L842.7 481.5L842.2 480.1L842.2 480.0L841.7 478.6L841.7 478.6L841.2 477.2L841.2 477.1L840.7 475.7L840.7 475.6L840.3 474.2L840.2 474.1L839.8 472.7L839.8 472.6L839.4 471.2L839.3 471.1L838.9 469.7L838.9 469.6L838.5 468.2L838.5 468.1L838.1 466.6L838.1 466.6L837.7 465.1L837.7 465.0L837.4 463.6L837.4 463.5L837.0 462.1L837.0 462.0L836.7 460.5L836.6 460.5L836.3 459.0L836.3 458.9L836.0 457.5L836.0 457.4L835.7 456.0L835.7 455.9L835.4 454.4L835.4 454.3L835.1 452.9L835.1 452.8L834.9 451.3L834.9 451.2L834.6 449.8L834.6 449.7L834.4 448.2L834.4 448.1L834.2 446.7L834.1 446.6L834.1 446.1Z"/>
<path d="M885.0 548.5L902.6 530.9"/>
<path d="M787.6 437.0L787.6 436.9L787.6 436.7L787.5 436.6L787.5 436.5L787.5 436.4L787.5 436.2L787.5 436.1L787.5 435.9L787.5 435.8L787.6 435.7L787.6 435.6L787.6 435.4L787.6 435.3L787.6 435.1L787.6 435.0L787.6 434.9L787.6 434.8L787.7 434.6L787.7 434.5L787.7 434.4L787.7 434.2L787.8 434.1L787.8 434.0L787.8 433.8L787.8 433.7L787.9 433.6L787.9 433.5L787.9 433.3L788.0 433.2L788.0 433.1L788.0 433.0L788.1 432.8L788.1 432.7L788.2 432.6L788.2 432.5L788.3 432.3L788.3 432.2L788.4 432.1L788.4 432.0L788.5 431.8L788.5 431.7L788.6 431.6L788.6 431.5L788.7 431.3L788.8 431.2L788.8 431.1L788.9 431.0L789.0 430.9L789.0 430.8L789.1 430.6L789.2 430.5L789.2 430.4L789.3 430.3L789.4 430.2L789.4 430.1L789.5 430.0L789.6 429.9L789.7 429.8L789.8 429.7L789.8 429.5L789.9 429.5L790.0 429.3L790.1 429.2L790.2 429.1L790.3 429.0L790.4 428.9L790.4 428.9L790.5 428.7L790.6 428.7L790.7 428.5L790.8 428.5L790.9 428.4L791.0 428.3L791.1 428.2L791.2 428.1L791.3 428.0L791.4 427.9L791.5 427.8L791.6 427.8L791.7 427.7L791.8 427.6L791.9 427.5L792.0 427.4L792.1 427.4L792.2 427.3L792.4 427.2L792.5 427.1L792.6 427.1L792.7 427.0L792.8 426.9L792.9 426.9L793.0 426.8L793.1 426.7L793.3 426.7L793.4 426.6L793.5 426.5L793.6 426.5L793.8 426.4L793.9 426.4L794.0 426.3L794.1 426.3L794.2 426.2L794.3 426.2L794.5 426.1L794.6 426.1L794.7 426.0L794.8 426.0L795.0 425.9L795.1 425.9L795.2 425.8L795.3 425.8L795.5 425.8L795.6 425.7L795.8 425.7L795.9 425.7L796.0 425.6L796.1 425.6L796.3 425.6L796.4 425.6L796.5 425.5L796.6 425.5L796.8 425.5L796.9 425.5L797.1 425.4L797.2 425.4L797.3 425.4L797.4 425.4L797.6 425.4L797.7 425.4L797.9 425.4L798.0 425.4L798.1 425.4L798.2 425.4L798.4 425.4L798.5 425.4L798.7 425.4L798.8 425.4L798.9 425.4L799.0 425.4L799.2 425.4L799.3 425.4L799.5 425.4L799.5 425.4L800.7 425.5L800.8 425.5L802.7 425.8L802.8 425.8L803.5 425.9L803.6 425.9L803.8 425.9L803.9 425.9L804.0 425.9L804.2 425.9L804.3 426.0L804.4 426.0L804.6 426.0L804.7 426.1L804.8 426.1L804.9 426.1L805.1 426.2L805.2 426.2L805.3 426.2L805.5 426.3L805.6 426.3L805.7 426.3L805.9 426.4L806.0 426.4L806.1 426.5L806.2 426.5L806.4 426.6L806.5 426.6L806.6 426.7L806.7 426.7L806.9 426.8L807.0 426.8L807.1 426.9L807.2 427.0L807.3 427.0L807.4 427.1L807.6 427.2L807.7 427.2L807.8 427.3L807.9 427.3L808.0 427.4L808.1 427.5L808.3 427.6L808.3 427.6L808.5 427.7L808.6 427.8L808.7 427.9L808.8 427.9L808.9 428.0L809.0 428.1L809.1 428.2L809.2 428.3L809.3 428.4L809.4 428.4L809.5 428.5L809.6 428.6L809.7 428.7L809.8 428.8L809.9 428.9L810.0 429.0L810.1 429.1L810.2 429.2L810.3 429.3L810.4 429.4L810.5 429.5L810.5 429.6L810.6 429.7L810.7 429.8L810.8 429.9L810.9 430.0L811.0 430.1L811.0 430.2L811.1 430.3L811.2 430.4L811.3 430.6L811.4 430.6L811.4 430.8L811.5 430.9L811.6 431.0L811.6 431.1L811.7 431.2L811.8 431.3L811.8 431.5L811.9 431.6L812.0 431.7L812.0 431.8L812.1 431.9L812.1 432.0L812.2 432.2L812.2 432.3L812.3 432.4L812.4 432.5L812.4 432.7L812.5 432.8L812.5 432.9L812.5 433.0L812.6 433.2L812.6 433.3L812.7 433.4L812.7 433.5L812.8 433.7L812.8 433.8L812.8 433.9L812.8 434.1L812.9 434.2L812.9 434.3L812.9 434.5L813.0 434.6L813.0 434.7L813.0 434.8L813.0 435.0L813.1 435.1L813.1 435.3L813.1 435.4L813.1 435.5L813.1 435.6L813.1 435.8L813.1 435.9L813.2 437.2L813.2 437.3L813.4 438.9L813.4 439.0L813.5 440.7L813.5 440.7L813.7 442.4L813.7 442.5L813.9 444.1L813.9 444.2L814.1 445.8L814.1 445.9L814.3 447.6L814.3 447.6L814.6 449.3L814.6 449.4L814.8 451.0L814.8 451.1L815.1 452.7L815.1 452.8L815.3 454.4L815.4 454.5L815.6 456.2L815.7 456.2L815.9 457.9L816.0 458.0L816.3 459.6L816.3 459.7L816.6 461.3L816.6 461.4L817.0 463.0L817.0 463.1L817.3 464.7L817.3 464.8L817.7 466.4L817.7 466.5L818.1 468.1L818.1 468.2L818.5 469.8L818.5 469.8L819.0 471.4L819.0 471.5L819.4 473.1L819.4 473.2L819.9 474.8L819.9 474.9L820.3 476.5L820.3 476.6L820.8 478.2L820.8 478.2L821.3 479.8L821.3 479.9L821.8 481.5L821.8 481.6L822.4 483.1L822.4 483.2L822.9 484.8L822.9 484.9L823.5 486.4L823.5 486.5L824.0 488.1L824.1 488.1L824.6 489.7L824.6 489.8L825.2 491.3L825.2 491.4L825.8 493.0L825.9 493.0L826.5 494.6L826.5 494.7L827.1 496.2L827.1 496.3L827.8 497.8L827.8 497.9L828.4 499.4L828.5 499.5L829.1 501.0L829.1 501.1L829.8 502.6L829.8 502.7L830.5 504.2L830.6 504.3L831.3 505.8L831.3 505.8L832.0 507.3L832.0 507.4L832.8 508.9L832.8 509.0L833.5 510.5L833.6 510.5L834.3 512.0L834.3 512.1L835.1 513.6L835.1 513.6L835.9 515.1L835.9 515.2L836.7 516.6L836.8 516.7L837.6 518.2L837.6 518.2L838.4 519.7L838.5 519.7L839.3 521.2L839.3 521.3L840.2 522.7L840.2 522.8L841.0 524.2L841.1 524.3L841.9 525.7L842.0 525.7L842.9 527.1L842.9 527.2L843.8 528.6L843.8 528.7L844.7 530.1L844.8 530.2L845.7 531.5L845.7 531.6L846.6 533.0L846.7 533.1L847.6 534.4L847.7 534.5L848.6 535.8L848.7 535.9L849.6 537.3L849.7 537.3L850.6 538.7L850.7 538.7L851.7 540.1L851.7 540.1L852.7 541.5L852.7 541.5L853.7 542.9L853.8 542.9L854.8 544.2L854.9 544.3L855.9 545.6L855.9 545.7L857.0 547.0L857.0 547.0L858.1 548.3L858.1 548.4L859.2 549.6L859.2 549.7L860.3 551.0L860.4 551.0L861.4 552.3L861.5 552.3L862.6 553.6L862.6 553.7L863.7 554.9L863.8 555.0L864.9 556.2L865.0 556.2L866.1 557.5L866.1 557.5L867.3 558.7L867.3 558.8L868.5 560.0L868.5 560.0L869.7 561.2L869.8 561.3L870.9 562.5L871.0 562.5L872.2 563.7L872.2 563.7L873.4 564.9L873.5 565.0L874.7 566.1L874.7 566.2L875.9 567.3L876.0 567.3L877.2 568.5L877.3 568.5L878.5 569.6L878.5 569.7L879.8 570.8L879.8 570.9L881.1 571.9L881.1 572.0L882.4 573.1L882.5 573.1L883.7 574.2L883.8 574.3L885.1 575.3L885.1 575.4L886.4 576.4L886.5 576.5L887.8 577.5L887.8 577.6L889.1 578.6L889.2 578.6L890.5 579.7L890.6 579.7L891.9 580.7L892.0 580.8L893.3 581.7L893.3 581.8L894.7 582.8L894.7 582.8L896.1 583.8L896.2 583.8L897.5 584.8L897.6 584.8L898.9 585.8L899.0 585.8L900.4 586.8L900.4 586.8L901.8 587.7L901.9 587.8L903.3 588.7L903.3 588.7L904.7 589.6L904.8 589.7L906.2 590.6L906.3 590.6L907.7 591.5L907.8 591.5L909.2 592.4L909.2 592.4L910.7 593.3L910.7 593.3L912.2 594.1L912.2 594.2L913.7 595.0L913.7 595.0L915.2 595.9L915.3 595.9L916.7 596.7L916.8 596.7L918.2 597.5L918.3 597.6L919.8 598.3L919.9 598.4L921.3 599.1L921.4 599.2L922.9 599.9L923.0 599.9L924.4 600.7L924.5 600.7L926.0 601.4L926.1 601.5L927.6 602.2L927.7 602.2L929.2 602.9L929.2 602.9L930.7 603.6L930.8 603.6L932.3 604.3L932.4 604.3L933.9 605.0L934.0 605.0L935.5 605.7L935.6 605.7L937.1 606.3L937.2 606.4L938.8 607.0L938.8 607.0L940.4 607.6L940.5 607.6L942.0 608.2L942.1 608.3L943.6 608.8L943.7 608.9L945.3 609.4L945.3 609.4L946.9 610.0L947.0 610.0L948.6 610.5L948.6 610.6L950.2 611.1L950.3 611.1L951.9 611.6L951.9 611.7L953.5 612.1L953.6 612.2L955.2 612.6L955.3 612.7L956.9 613.1L956.9 613.2L958.5 613.6L958.6 613.6L960.2 614.1L960.3 614.1L961.9 614.5L962.0 614.5L963.6 614.9L963.6 615.0L965.3 615.3L965.3 615.4L967.0 615.7L967.0 615.8L968.6 616.1L968.7 616.1L970.3 616.5L970.4 616.5L972.0 616.9L972.1 616.9L973.8 617.2L973.8 617.2L975.5 617.5L975.5 617.5L977.2 617.8L977.3 617.8L978.9 618.1L979.0 618.1L980.6 618.4L980.7 618.4L982.3 618.7L982.4 618.7L984.0 618.9L984.1 618.9L985.8 619.2L985.8 619.2L987.5 619.4L987.6 619.4L989.2 619.6L989.3 619.6L990.9 619.8L991.0 619.8L992.7 619.9L992.8 620.0L994.4 620.1L994.5 620.1L996.1 620.3L996.2 620.3L997.6 620.4L997.7 620.4L997.9 620.4L998.0 620.4L998.1 620.4L998.2 620.4L998.4 620.4L998.5 620.5L998.7 620.5L998.8 620.5L998.9 620.5L999.0 620.6L999.2 620.6L999.3 620.6L999.4 620.7L999.6 620.7L999.7 620.7L999.8 620.7L1000.0 620.8L1000.1 620.8L1000.2 620.9L1000.3 620.9L1000.5 621.0L1000.6 621.0L1000.7 621.0L1000.8 621.1L1001.0 621.1L1001.1 621.2L1001.2 621.3L1001.3 621.3L1001.5 621.4L1001.6 621.4L1001.7 621.5L1001.8 621.5L1001.9 621.6L1002.0 621.7L1002.2 621.7L1002.3 621.8L1002.4 621.9L1002.5 621.9L1002.6 622.0L1002.7 622.1L1002.9 622.2L1003.0 622.2L1003.1 622.3L1003.2 622.4L1003.3 622.5L1003.4 622.5L1003.5 622.6L1003.6 622.7L1003.7 622.8L1003.8 622.9L1003.9 623.0L1004.0 623.0L1004.1 623.1L1004.2 623.2L1004.3 623.3L1004.4 623.4L1004.5 623.5L1004.6 623.6L1004.7 623.7L1004.8 623.8L1004.9 623.9L1005.0 624.0L1005.1 624.1L1005.1 624.2L1005.2 624.3L1005.3 624.4L1005.4 624.5L1005.5 624.6L1005.6 624.7L1005.6 624.8L1005.7 624.9L1005.8 625.0L1005.9 625.2L1005.9 625.2L1006.0 625.4L1006.1 625.5L1006.2 625.6L1006.2 625.7L1006.3 625.8L1006.3 625.9L1006.4 626.1L1006.5 626.2L1006.5 626.3L1006.6 626.4L1006.7 626.5L1006.7 626.7L1006.8 626.8L1006.8 626.9L1006.9 627.0L1006.9 627.1L1007.0 627.3L1007.0 627.4L1007.1 627.5L1007.1 627.6L1007.2 627.8L1007.2 627.9L1007.2 628.0L1007.3 628.2L1007.3 628.3L1007.3 628.4L1007.4 628.6L1007.4 628.7L1007.4 628.8L1007.5 628.9L1007.5 629.1L1007.5 629.2L1007.6 629.3L1007.6 629.5L1007.6 629.6L1007.6 629.7L1007.6 629.9L1007.6 630.0L1007.7 630.7L1007.7 630.8L1008.0 632.7L1008.0 632.8L1008.1 634.0L1008.1 634.0L1008.1 634.2L1008.1 634.3L1008.1 634.5L1008.1 634.6L1008.1 634.7L1008.1 634.8L1008.1 635.0L1008.1 635.1L1008.1 635.3L1008.1 635.4L1008.1 635.5L1008.1 635.6L1008.1 635.8L1008.1 635.9L1008.1 636.1L1008.1 636.2L1008.1 636.3L1008.1 636.4L1008.0 636.6L1008.0 636.7L1008.0 636.9L1008.0 637.0L1007.9 637.1L1007.9 637.2L1007.9 637.4L1007.9 637.5L1007.8 637.6L1007.8 637.7L1007.8 637.9L1007.7 638.0L1007.7 638.2L1007.7 638.3L1007.6 638.4L1007.6 638.5L1007.5 638.7L1007.5 638.8L1007.4 638.9L1007.4 639.0L1007.3 639.2L1007.3 639.3L1007.2 639.4L1007.2 639.5L1007.1 639.6L1007.1 639.7L1007.0 639.9L1007.0 640.0L1006.9 640.1L1006.8 640.2L1006.8 640.4L1006.7 640.5L1006.6 640.6L1006.6 640.7L1006.5 640.8L1006.4 640.9L1006.4 641.0L1006.3 641.1L1006.2 641.3L1006.1 641.4L1006.1 641.5L1006.0 641.6L1005.9 641.7L1005.8 641.8L1005.7 641.9L1005.7 642.0L1005.6 642.1L1005.5 642.2L1005.4 642.3L1005.3 642.4L1005.2 642.5L1005.1 642.6L1005.0 642.7L1005.0 642.8L1004.8 642.9L1004.8 643.0L1004.6 643.1L1004.6 643.1L1004.5 643.2L1004.4 643.3L1004.3 643.4L1004.2 643.5L1004.0 643.6L1004.0 643.7L1003.8 643.7L1003.7 643.8L1003.6 643.9L1003.5 644.0L1003.4 644.1L1003.3 644.1L1003.2 644.2L1003.1 644.3L1003.0 644.3L1002.9 644.4L1002.7 644.5L1002.6 644.5L1002.5 644.6L1002.4 644.7L1002.3 644.7L1002.2 644.8L1002.0 644.9L1001.9 644.9L1001.8 645.0L1001.7 645.0L1001.5 645.1L1001.4 645.1L1001.3 645.2L1001.2 645.2L1001.0 645.3L1000.9 645.3L1000.8 645.4L1000.7 645.4L1000.5 645.5L1000.4 645.5L1000.3 645.5L1000.2 645.6L1000.0 645.6L999.9 645.6L999.8 645.7L999.7 645.7L999.5 645.7L999.4 645.7L999.3 645.8L999.1 645.8L999.0 645.8L998.9 645.8L998.7 645.9L998.6 645.9L998.5 645.9L998.4 645.9L998.2 645.9L998.1 645.9L997.9 645.9L997.8 645.9L997.7 646.0L997.6 646.0L997.4 646.0L997.3 646.0L997.1 646.0L997.0 646.0L996.9 646.0L996.8 645.9L996.6 645.9L996.5 645.9L996.2 645.9L996.1 645.9L994.3 645.8L994.2 645.8L992.3 645.6L992.2 645.6L990.4 645.4L990.3 645.4L988.4 645.2L988.3 645.2L986.5 645.0L986.4 645.0L984.5 644.8L984.4 644.8L982.6 644.5L982.5 644.5L980.6 644.3L980.5 644.3L978.7 644.0L978.6 644.0L976.7 643.7L976.7 643.7L974.8 643.4L974.7 643.4L972.9 643.1L972.8 643.0L970.9 642.7L970.9 642.7L969.0 642.3L968.9 642.3L967.1 642.0L967.0 641.9L965.2 641.6L965.1 641.5L963.3 641.1L963.2 641.1L961.3 640.7L961.2 640.7L959.4 640.3L959.3 640.2L957.5 639.8L957.4 639.8L955.6 639.3L955.5 639.3L953.7 638.8L953.6 638.8L951.8 638.3L951.7 638.3L949.9 637.8L949.9 637.7L948.1 637.2L948.0 637.2L946.2 636.7L946.1 636.6L944.3 636.1L944.2 636.0L942.4 635.5L942.4 635.4L940.6 634.9L940.5 634.8L938.7 634.2L938.6 634.2L936.9 633.6L936.8 633.6L935.0 632.9L934.9 632.9L933.2 632.2L933.1 632.2L931.3 631.5L931.3 631.5L929.5 630.8L929.4 630.8L927.7 630.1L927.6 630.1L925.9 629.4L925.8 629.3L924.1 628.6L924.0 628.6L922.3 627.8L922.2 627.8L920.5 627.0L920.4 627.0L918.7 626.2L918.6 626.2L916.9 625.4L916.8 625.4L915.1 624.6L915.0 624.5L913.4 623.7L913.3 623.7L911.6 622.9L911.5 622.8L909.8 622.0L909.8 621.9L908.1 621.1L908.0 621.0L906.4 620.2L906.3 620.1L904.6 619.2L904.6 619.2L902.9 618.3L902.8 618.3L901.2 617.3L901.1 617.3L899.5 616.4L899.4 616.3L897.8 615.4L897.7 615.3L896.1 614.4L896.0 614.3L894.4 613.4L894.4 613.3L892.8 612.3L892.7 612.3L891.1 611.3L891.0 611.2L889.5 610.2L889.4 610.2L887.8 609.2L887.7 609.1L886.2 608.1L886.1 608.0L884.6 607.0L884.5 606.9L883.0 605.8L882.9 605.8L881.4 604.7L881.3 604.7L879.8 603.6L879.7 603.5L878.2 602.4L878.1 602.3L876.6 601.2L876.5 601.2L875.0 600.0L875.0 600.0L873.5 598.8L873.4 598.8L872.0 597.6L871.9 597.6L870.4 596.4L870.3 596.3L868.9 595.2L868.8 595.1L867.4 593.9L867.3 593.8L865.9 592.6L865.8 592.6L864.4 591.4L864.3 591.3L862.9 590.1L862.9 590.0L861.5 588.8L861.4 588.7L860.0 587.4L859.9 587.4L858.6 586.1L858.5 586.0L857.1 584.8L857.1 584.7L855.7 583.4L855.7 583.3L854.3 582.0L854.3 582.0L852.9 580.7L852.9 580.6L851.6 579.3L851.5 579.2L850.2 577.9L850.1 577.8L848.8 576.4L848.8 576.4L847.5 575.0L847.4 574.9L846.1 573.6L846.1 573.5L844.8 572.1L844.8 572.1L843.5 570.7L843.5 570.6L842.2 569.2L842.2 569.1L840.9 567.7L840.9 567.6L839.7 566.2L839.6 566.1L838.4 564.7L838.4 564.6L837.2 563.2L837.1 563.1L836.0 561.6L835.9 561.6L834.7 560.1L834.7 560.0L833.5 558.6L833.5 558.5L832.3 557.0L832.3 556.9L831.2 555.4L831.1 555.3L830.0 553.8L830.0 553.8L828.9 552.2L828.8 552.2L827.7 550.6L827.7 550.6L826.6 549.0L826.6 549.0L825.5 547.4L825.5 547.3L824.4 545.8L824.4 545.7L823.3 544.1L823.3 544.1L822.3 542.5L822.2 542.4L821.2 540.8L821.2 540.8L820.2 539.2L820.2 539.1L819.2 537.5L819.1 537.4L818.2 535.8L818.1 535.7L817.2 534.1L817.1 534.0L816.2 532.4L816.2 532.3L815.3 530.7L815.2 530.6L814.3 529.0L814.3 528.9L813.4 527.2L813.3 527.2L812.5 525.5L812.4 525.4L811.6 523.8L811.5 523.7L810.7 522.0L810.6 521.9L809.8 520.3L809.8 520.2L809.0 518.5L808.9 518.4L808.1 516.7L808.1 516.6L807.3 514.9L807.3 514.8L806.5 513.1L806.5 513.1L805.7 511.4L805.7 511.3L804.9 509.5L804.9 509.5L804.2 507.7L804.1 507.7L803.4 505.9L803.4 505.8L802.7 504.1L802.7 504.0L802.0 502.3L802.0 502.2L801.3 500.4L801.3 500.4L800.6 498.6L800.6 498.5L800.0 496.8L799.9 496.7L799.3 494.9L799.3 494.8L798.7 493.0L798.6 493.0L798.1 491.2L798.0 491.1L797.5 489.3L797.4 489.2L796.9 487.4L796.9 487.3L796.3 485.6L796.3 485.5L795.8 483.7L795.7 483.6L795.2 481.8L795.2 481.7L794.7 479.9L794.7 479.8L794.2 478.0L794.2 477.9L793.7 476.1L793.7 476.0L793.3 474.2L793.2 474.1L792.8 472.3L792.8 472.2L792.4 470.4L792.4 470.3L792.0 468.5L791.9 468.4L791.6 466.5L791.5 466.4L791.2 464.6L791.2 464.5L790.8 462.7L790.8 462.6L790.5 460.8L790.5 460.7L790.1 458.8L790.1 458.7L789.8 456.9L789.8 456.8L789.5 454.9L789.5 454.8L789.2 453.0L789.2 452.9L789.0 451.1L789.0 451.0L788.7 449.1L788.7 449.0L788.5 447.2L788.5 447.1L788.3 445.2L788.3 445.1L788.1 443.3L788.1 443.2L787.9 441.3L787.9 441.2L787.7 439.4L787.7 439.3L787.6 437.4L787.6 437.3L787.6 437.0Z"/>
<path d="M852.9 580.6L871.0 562.5"/>
<path d="M873.9 657.1L873.9 655.4L873.9 653.7L873.8 651.9L873.7 650.2L873.5 648.5L873.4 646.8L873.2 645.1L872.9 643.4L872.7 641.7L872.4 640.0L872.1 638.3L871.7 636.6L871.4 634.9L871.0 633.2L870.5 631.6L870.1 629.9L869.6 628.3L869.0 626.6L868.5 625.0L867.9 623.4L867.3 621.8L866.7 620.2L866.0 618.6L865.3 617.0L864.6 615.5L863.8 613.9L863.1 612.4L862.3 610.8L861.4 609.3L860.6 607.8L859.7 606.4L858.8 604.9L857.8 603.5L856.9 602.0L855.9 600.6L854.9 599.2L853.9 597.8L852.8 596.5L851.7 595.2L850.6 593.8L849.5 592.5L848.3 591.3L847.2 590.0L846.0 588.8L844.7 587.5L843.5 586.3L842.2 585.2L841.0 584.0L839.7 582.9L838.3 581.8L837.0 580.7L835.7 579.6L834.3 578.6L832.9 577.6L831.5 576.6L830.0 575.7L828.6 574.7L827.1 573.8L825.7 572.9L824.2 572.1L822.7 571.2L821.1 570.4L819.6 569.7L818.0 568.9L816.5 568.2L814.9 567.5L813.3 566.8L811.7 566.2L810.1 565.6L808.5 565.0L806.9 564.5L805.2 563.9L803.6 563.4L801.9 563.0L800.3 562.5L798.6 562.1L796.9 561.8L795.2 561.4L793.5 561.1L791.8 560.8L790.1 560.6L788.4 560.3L786.7 560.1L785.0 560.0L783.3 559.8L781.6 559.7L779.8 559.6L778.1 559.6L776.4 559.6"/>
<path d="M1011.8 657.1L1011.8 655.2L1011.8 653.4L1011.8 651.5L1011.7 649.7L1011.7 647.8L1011.6 646.0L1011.5 644.1L1011.4 642.2L1011.3 640.4L1011.1 638.5L1011.0 636.7L1010.8 634.8L1010.6 633.0L1010.4 631.1L1010.2 629.3L1010.0 627.4L1009.7 625.6L1009.5 623.8L1009.2 621.9L1008.9 620.1L1008.6 618.2L1008.3 616.4L1008.0 614.6L1007.6 612.8L1007.3 610.9L1006.9 609.1L1006.5 607.3L1006.1 605.5L1005.7 603.7L1005.3 601.9L1004.8 600.1L1004.4 598.3L1003.9 596.5L1003.4 594.7L1002.9 592.9L1002.4 591.1L1001.9 589.3L1001.3 587.5L1000.8 585.8L1000.2 584.0L999.6 582.2L999.0 580.5L998.4 578.7L997.8 577.0L997.2 575.2L996.5 573.5L995.8 571.7L995.2 570.0L994.5 568.3L993.7 566.6L993.0 564.9L992.3 563.1L991.5 561.4L990.8 559.8L990.0 558.1L989.2 556.4L988.4 554.7L987.6 553.0L986.8 551.4L985.9 549.7L985.1 548.1L984.2 546.4L983.3 544.8L982.4 543.2L981.5 541.5L980.6 539.9L979.7 538.3L978.7 536.7L977.8 535.1L976.8 533.5L975.8 531.9L974.8 530.4L973.8 528.8L972.8 527.3L971.8 525.7L970.7 524.2L969.7 522.6L968.6 521.1L967.5 519.6L966.4 518.1L965.3 516.6L964.2 515.1L963.1 513.6L962.0 512.2L960.8 510.7L959.7 509.3L958.5 507.8L957.3 506.4L956.1 505.0L954.9 503.6L953.7 502.1L952.4 500.8L951.2 499.4L950.0 498.0L948.7 496.6L947.4 495.3L946.1 493.9L944.8 492.6L943.5 491.3L942.2 490.0L940.9 488.7L939.6 487.4L938.2 486.1L936.9 484.8L935.5 483.5L934.1 482.3L932.7 481.1L931.4 479.8L929.9 478.6L928.5 477.4L927.1 476.2L925.7 475.0L924.2 473.8L922.8 472.7L921.3 471.5L919.9 470.4L918.4 469.3L916.9 468.2L915.4 467.1L913.9 466.0L912.4 464.9L910.9 463.8L909.3 462.8L907.8 461.7L906.2 460.7L904.7 459.7L903.1 458.7L901.6 457.7L900.0 456.7L898.4 455.7L896.8 454.8L895.2 453.8L893.6 452.9L892.0 452.0L890.3 451.1L888.7 450.2L887.1 449.3L885.4 448.4L883.8 447.6L882.1 446.7L880.5 445.9L878.8 445.1L877.1 444.3L875.4 443.5L873.7 442.7L872.1 442.0L870.4 441.2L868.6 440.5L866.9 439.8L865.2 439.0L863.5 438.3L861.8 437.7L860.0 437.0L858.3 436.3L856.5 435.7L854.8 435.1L853.0 434.5L851.3 433.9L849.5 433.3L847.7 432.7L846.0 432.2L844.2 431.6L842.4 431.1L840.6 430.6L838.8 430.1L837.0 429.6L835.2 429.1L833.4 428.7L831.6 428.2L829.8 427.8L828.0 427.4L826.2 427.0L824.4 426.6L822.6 426.2L820.7 425.9L818.9 425.5L817.1 425.2L815.3 424.9L813.4 424.6L811.6 424.3L809.7 424.0L807.9 423.8L806.1 423.5L804.2 423.3L802.4 423.1L800.5 422.9L798.7 422.7L796.8 422.5L795.0 422.4L793.1 422.2L791.3 422.1L789.4 422.0L787.5 421.9L785.7 421.8L783.8 421.8L782.0 421.7L780.1 421.7L778.3 421.7L776.4 421.7"/>
<path d="M1013.4 657.1L1013.4 655.2L1013.4 653.4L1013.4 651.5L1013.3 649.6L1013.3 647.7L1013.2 645.9L1013.1 644.0L1013.0 642.1L1012.9 640.3L1012.7 638.4L1012.6 636.5L1012.4 634.7L1012.2 632.8L1012.0 631.0L1011.8 629.1L1011.6 627.2L1011.3 625.4L1011.1 623.5L1010.8 621.7L1010.5 619.8L1010.2 618.0L1009.9 616.1L1009.6 614.3L1009.2 612.5L1008.8 610.6L1008.5 608.8L1008.1 607.0L1007.7 605.1L1007.3 603.3L1006.8 601.5L1006.4 599.7L1005.9 597.9L1005.5 596.0L1005.0 594.2L1004.5 592.4L1003.9 590.6L1003.4 588.8L1002.9 587.1L1002.3 585.3L1001.7 583.5L1001.1 581.7L1000.5 579.9L999.9 578.2L999.3 576.4L998.7 574.7L998.0 572.9L997.3 571.2L996.6 569.4L995.9 567.7L995.2 566.0L994.5 564.2L993.8 562.5L993.0 560.8L992.2 559.1L991.5 557.4L990.7 555.7L989.9 554.0L989.0 552.3L988.2 550.7L987.4 549.0L986.5 547.3L985.6 545.7L984.7 544.0L983.8 542.4L982.9 540.7L982.0 539.1L981.1 537.5L980.1 535.9L979.1 534.3L978.2 532.7L977.2 531.1L976.2 529.5L975.2 527.9L974.1 526.4L973.1 524.8L972.1 523.3L971.0 521.7L969.9 520.2L968.8 518.7L967.7 517.2L966.6 515.7L965.5 514.2L964.4 512.7L963.2 511.2L962.1 509.7L960.9 508.3L959.7 506.8L958.5 505.4L957.3 503.9L956.1 502.5L954.9 501.1L953.6 499.7L952.4 498.3L951.1 496.9L949.9 495.5L948.6 494.2L947.3 492.8L946.0 491.5L944.7 490.1L943.4 488.8L942.0 487.5L940.7 486.2L939.3 484.9L938.0 483.6L936.6 482.4L935.2 481.1L933.8 479.9L932.4 478.6L931.0 477.4L929.6 476.2L928.1 475.0L926.7 473.8L925.2 472.6L923.8 471.4L922.3 470.3L920.8 469.1L919.3 468.0L917.8 466.9L916.3 465.8L914.8 464.7L913.3 463.6L911.8 462.5L910.2 461.4L908.7 460.4L907.1 459.4L905.6 458.3L904.0 457.3L902.4 456.3L900.8 455.3L899.2 454.4L897.6 453.4L896.0 452.4L894.4 451.5L892.8 450.6L891.1 449.7L889.5 448.8L887.8 447.9L886.2 447.0L884.5 446.1L882.8 445.3L881.2 444.5L879.5 443.6L877.8 442.8L876.1 442.0L874.4 441.3L872.7 440.5L871.0 439.7L869.3 439.0L867.5 438.3L865.8 437.6L864.1 436.9L862.3 436.2L860.6 435.5L858.8 434.8L857.1 434.2L855.3 433.6L853.6 433.0L851.8 432.4L850.0 431.8L848.2 431.2L846.4 430.6L844.7 430.1L842.9 429.6L841.1 429.0L839.3 428.5L837.5 428.0L835.6 427.6L833.8 427.1L832.0 426.7L830.2 426.2L828.4 425.8L826.5 425.4L824.7 425.0L822.9 424.7L821.0 424.3L819.2 423.9L817.4 423.6L815.5 423.3L813.7 423.0L811.8 422.7L810.0 422.4L808.1 422.2L806.3 421.9L804.4 421.7L802.5 421.5L800.7 421.3L798.8 421.1L797.0 420.9L795.1 420.8L793.2 420.6L791.4 420.5L789.5 420.4L787.6 420.3L785.8 420.2L783.9 420.2L782.0 420.1L780.1 420.1L778.3 420.1L776.4 420.1"/>
<path d="M1168.9 657.1L1168.9 655.0L1168.9 653.0L1168.9 650.9L1168.8 648.9L1168.8 646.8L1168.7 644.7L1168.6 642.7L1168.6 640.6L1168.5 638.5L1168.4 636.5L1168.3 634.4L1168.1 632.4L1168.0 630.3L1167.9 628.3L1167.7 626.2L1167.5 624.1L1167.3 622.1L1167.2 620.0L1167.0 618.0L1166.7 615.9L1166.5 613.9L1166.3 611.8L1166.1 609.8L1165.8 607.7L1165.5 605.7L1165.3 603.7L1165.0 601.6L1164.7 599.6L1164.4 597.5L1164.0 595.5L1163.7 593.5L1163.4 591.4L1163.0 589.4L1162.7 587.4L1162.3 585.3L1161.9 583.3L1161.5 581.3L1161.1 579.3L1160.7 577.2L1160.3 575.2L1159.8 573.2L1159.4 571.2L1158.9 569.2L1158.5 567.2L1158.0 565.2L1157.5 563.2L1157.0 561.2L1156.5 559.2L1156.0 557.2L1155.4 555.2L1154.9 553.2L1154.4 551.2L1153.8 549.2L1153.2 547.2L1152.6 545.3L1152.0 543.3L1151.4 541.3L1150.8 539.3L1150.2 537.4L1149.6 535.4L1148.9 533.5L1148.3 531.5L1147.6 529.5L1146.9 527.6L1146.2 525.7L1145.6 523.7L1144.8 521.8L1144.1 519.8L1143.4 517.9L1142.7 516.0L1141.9 514.1L1141.2 512.1L1140.4 510.2L1139.6 508.3L1138.8 506.4L1138.0 504.5L1137.2 502.6L1136.4 500.7L1135.6 498.8L1134.8 496.9L1133.9 495.1L1133.1 493.2L1132.2 491.3L1131.3 489.5L1130.4 487.6L1129.5 485.7L1128.6 483.9L1127.7 482.0L1126.8 480.2L1125.8 478.4L1124.9 476.5L1124.0 474.7L1123.0 472.9L1122.0 471.0L1121.0 469.2L1120.0 467.4L1119.0 465.6L1118.0 463.8L1117.0 462.0L1116.0 460.2L1114.9 458.5L1113.9 456.7L1112.8 454.9L1111.8 453.2L1110.7 451.4L1109.6 449.6L1108.5 447.9L1107.4 446.2L1106.3 444.4L1105.2 442.7L1104.0 441.0L1102.9 439.2L1101.8 437.5L1100.6 435.8L1099.4 434.1L1098.3 432.4L1097.1 430.7L1095.9 429.1L1094.7 427.4L1093.5 425.7L1092.2 424.1L1091.0 422.4L1089.8 420.8L1088.5 419.1L1087.3 417.5L1086.0 415.8L1084.7 414.2L1083.5 412.6L1082.2 411.0L1080.9 409.4L1079.6 407.8L1078.3 406.2L1076.9 404.6L1075.6 403.0L1074.3 401.5L1072.9 399.9L1071.6 398.4L1070.2 396.8L1068.8 395.3L1067.4 393.7L1066.1 392.2L1064.7 390.7L1063.3 389.2L1061.9 387.7L1060.4 386.2L1059.0 384.7L1057.6 383.2L1056.1 381.7L1054.7 380.3L1053.2 378.8L1051.8 377.4L1050.3 375.9L1048.8 374.5L1047.3 373.1L1045.8 371.6L1044.3 370.2L1042.8 368.8L1041.3 367.4L1039.8 366.1L1038.2 364.7L1036.7 363.3L1035.1 361.9L1033.6 360.6L1032.0 359.2L1030.5 357.9L1028.9 356.6L1027.3 355.2L1025.7 353.9L1024.1 352.6L1022.5 351.3L1020.9 350.0L1019.3 348.8L1017.7 347.5L1016.0 346.2L1014.4 345.0L1012.7 343.7L1011.1 342.5L1009.4 341.3L1007.8 340.0L1006.1 338.8L1004.4 337.6L1002.8 336.4L1001.1 335.2L999.4 334.1L997.7 332.9L996.0 331.7L994.3 330.6L992.5 329.5L990.8 328.3L989.1 327.2L987.3 326.1L985.6 325.0L983.9 323.9L982.1 322.8L980.3 321.7L978.6 320.7L976.8 319.6L975.0 318.6L973.3 317.5L971.5 316.5L969.7 315.5L967.9 314.5L966.1 313.5L964.3 312.5L962.5 311.5L960.6 310.5L958.8 309.5L957.0 308.6L955.1 307.7L953.3 306.7L951.5 305.8L949.6 304.9L947.8 304.0L945.9 303.1L944.0 302.2L942.2 301.3L940.3 300.4L938.4 299.6L936.6 298.7L934.7 297.9L932.8 297.1L930.9 296.3L929.0 295.5L927.1 294.7L925.2 293.9L923.3 293.1L921.4 292.3L919.4 291.6L917.5 290.8L915.6 290.1L913.7 289.4L911.7 288.7L909.8 287.9L907.8 287.3L905.9 286.6L904.0 285.9L902.0 285.2L900.0 284.6L898.1 283.9L896.1 283.3L894.2 282.7L892.2 282.1L890.2 281.5L888.2 280.9L886.3 280.3L884.3 279.7L882.3 279.1L880.3 278.6L878.3 278.1L876.3 277.5L874.3 277.0L872.3 276.5L870.3 276.0L868.3 275.5L866.3 275.0L864.3 274.6L862.3 274.1L860.3 273.7L858.3 273.2L856.3 272.8L854.2 272.4L852.2 272.0L850.2 271.6L848.2 271.2L846.1 270.8L844.1 270.5L842.1 270.1L840.0 269.8L838.0 269.5L836.0 269.1L833.9 268.8L831.9 268.5L829.8 268.2L827.8 268.0L825.8 267.7L823.7 267.4L821.7 267.2L819.6 267.0L817.6 266.8L815.5 266.5L813.5 266.3L811.4 266.2L809.4 266.0L807.3 265.8L805.2 265.6L803.2 265.5L801.1 265.4L799.1 265.2L797.0 265.1L795.0 265.0L792.9 264.9L790.8 264.9L788.8 264.8L786.7 264.7L784.6 264.7L782.6 264.6L780.5 264.6L778.5 264.6L776.4 264.6"/>
<path d="M776.4 657.1L776.4 264.6"/>
<path d="M776.4 657.1L1168.9 657.1"/>
<path d="M1005.4 595.7L1155.5 555.5"/>
<path d="M981.7 538.6L1116.3 460.8"/>
<path d="M944.0 489.5L1053.9 379.6"/>
<path d="M894.9 451.8L972.7 317.2"/>
<path d="M837.8 428.1L878.0 278.0"/>
<path d="M793.91 414.24A1.74 1.74 0 0 1 792.39 412.51L792.39 329.10A5.23 5.23 0 0 1 798.31 323.91L841.47 329.59A5.23 5.23 0 0 1 845.85 336.14L824.26 416.71A1.74 1.74 0 0 1 822.35 417.98Z"/>
<path d="M792.4 368.6L835.6 374.3"/>
<path d="M800.3 415.1L799.5 421.2"/>
<path d="M815.9 417.1L815.1 423.2"/>
<path d="M856.17 427.05A1.74 1.74 0 0 1 855.15 424.98L876.74 344.41A5.23 5.23 0 0 1 883.80 340.93L924.02 357.59A5.23 5.23 0 0 1 926.55 365.05L884.85 437.28A1.74 1.74 0 0 1 882.67 438.02Z"/>
<path d="M866.5 382.6L906.8 399.2"/>
<path d="M862.2 429.5L859.8 435.2"/>
<path d="M876.7 435.5L874.3 441.2"/>
<path d="M912.99 455.53A1.74 1.74 0 0 1 912.54 453.28L954.25 381.04A5.23 5.23 0 0 1 961.97 379.50L996.51 406.01A5.23 5.23 0 0 1 997.02 413.86L938.04 472.84A1.74 1.74 0 0 1 935.75 472.99Z"/>
<path d="M934.5 415.2L969.1 441.8"/>
<path d="M918.1 459.5L914.4 464.4"/>
<path d="M930.6 469.0L926.9 473.9"/>
<path d="M960.51 497.75A1.74 1.74 0 0 1 960.66 495.46L1019.64 436.48A5.23 5.23 0 0 1 1027.49 436.99L1054.00 471.53A5.23 5.23 0 0 1 1052.46 479.25L980.22 520.96A1.74 1.74 0 0 1 977.97 520.51Z"/>
<path d="M991.7 464.4L1018.3 499.0"/>
<path d="M964.5 502.9L959.6 506.6"/>
<path d="M974.0 515.4L969.1 519.1"/>
<path d="M995.48 550.83A1.74 1.74 0 0 1 996.22 548.65L1068.45 506.95A5.23 5.23 0 0 1 1075.91 509.48L1092.57 549.70A5.23 5.23 0 0 1 1089.09 556.76L1008.52 578.35A1.74 1.74 0 0 1 1006.45 577.33Z"/>
<path d="M1034.3 526.7L1050.9 567.0"/>
<path d="M998.0 556.8L992.3 559.2"/>
<path d="M1004.0 571.3L998.3 573.7"/>
<path d="M1015.52 611.15A1.74 1.74 0 0 1 1016.79 609.24L1097.36 587.65A5.23 5.23 0 0 1 1103.91 592.03L1109.59 635.19A5.23 5.23 0 0 1 1104.40 641.11L1020.99 641.11A1.74 1.74 0 0 1 1019.26 639.59Z"/>
<path d="M1059.2 597.9L1064.9 641.1"/>
<path d="M1016.4 617.6L1010.3 618.4"/>
<path d="M1018.4 633.2L1012.3 634.0"/></g>
</svg>
</body></html>
